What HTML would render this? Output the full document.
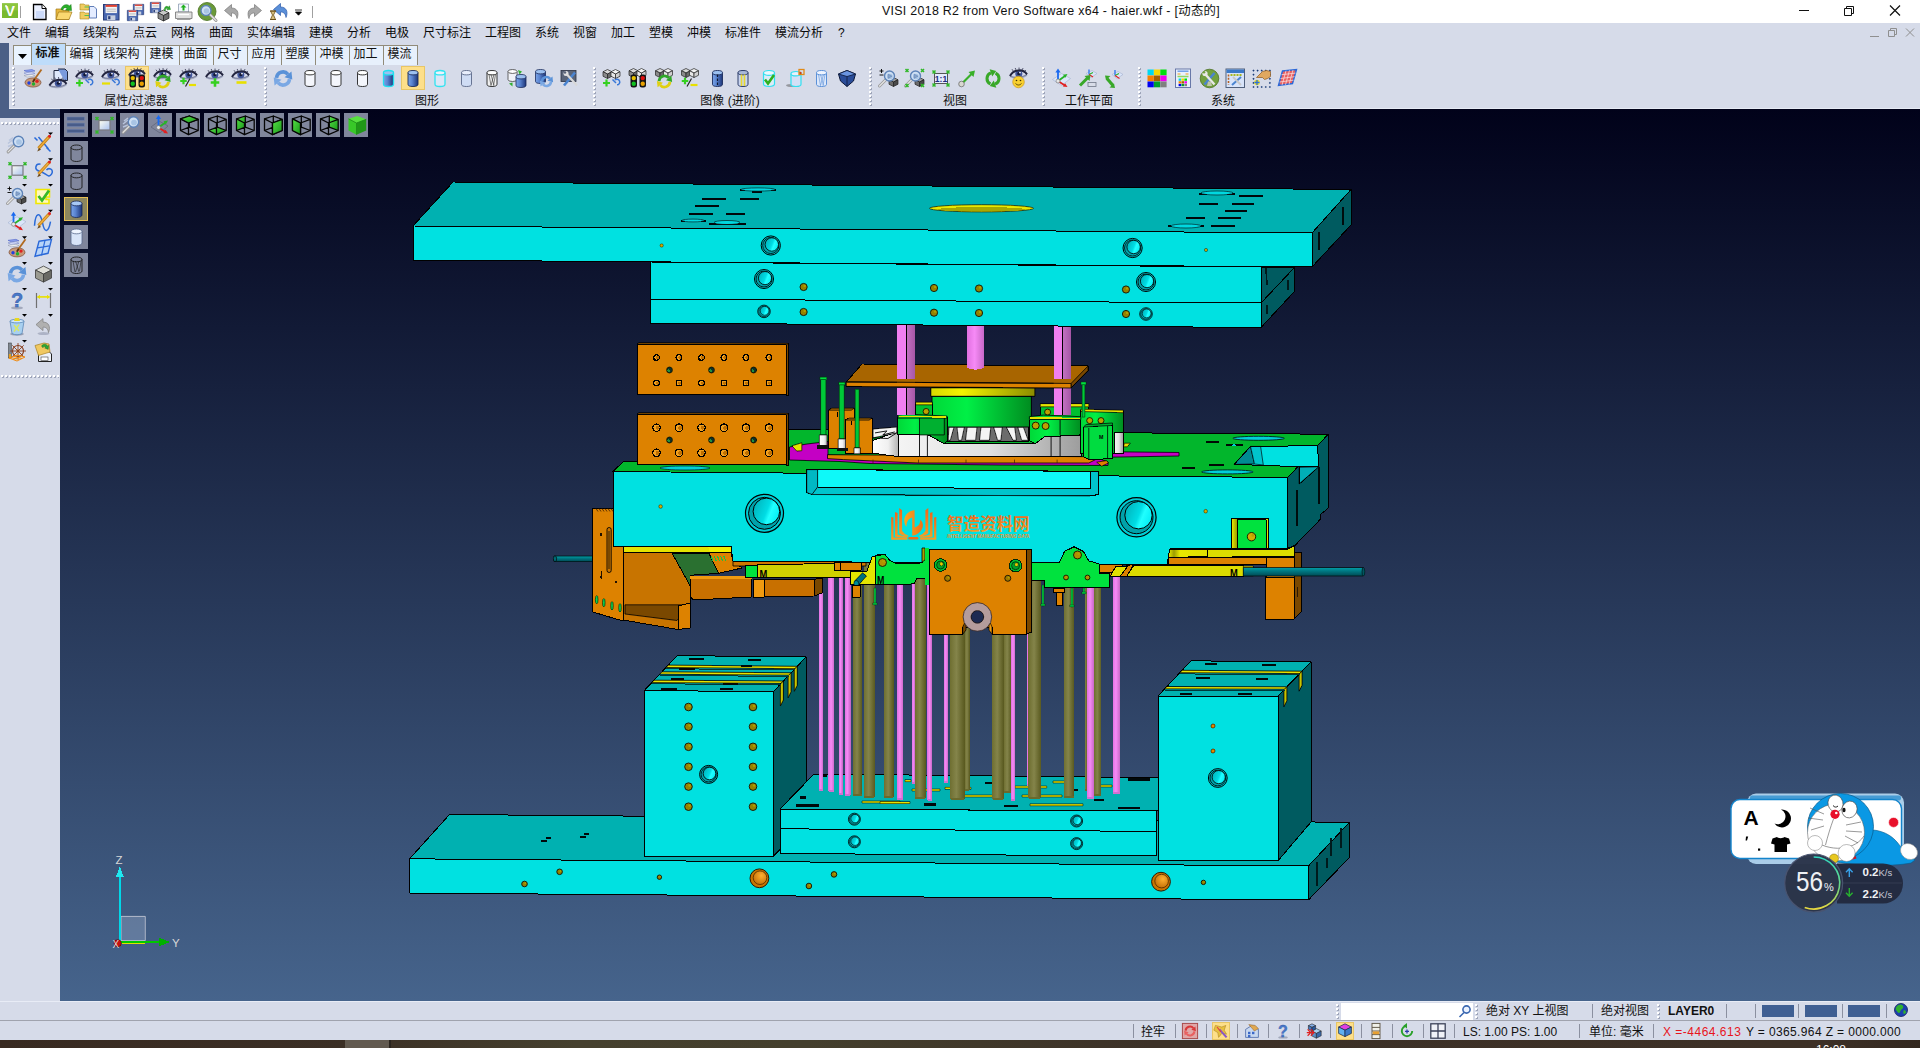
<!DOCTYPE html>
<html lang="zh"><head><meta charset="utf-8"><title>VISI 2018 R2</title>
<style>
*{box-sizing:border-box;margin:0;padding:0}
html,body{width:1920px;height:1048px;overflow:hidden;background:#d6dbe9}
body{font-family:"Liberation Sans","Noto Sans CJK SC",sans-serif;font-size:12px;color:#000;position:relative}
.abs{position:absolute}
#title{left:0;top:0;width:1920px;height:23px;background:#fff}
#title .cap{position:absolute;left:881px;top:3px;width:340px;text-align:center;font-size:12.4px;letter-spacing:0.3px;line-height:16px;white-space:nowrap;color:#111}
#menubar{left:0;top:23px;width:1920px;height:20px;background:#d6dbe9}
#menubar span{position:absolute;top:1px;line-height:18px;font-size:12px;white-space:nowrap;color:#0a0a0a}
#strip{left:0;top:43px;width:9px;height:75px;background:#4b5f86}
#strip2{left:0;top:109px;width:60px;height:9px;background:#4b5f86}
#tabs{left:10px;top:43px;height:22px;width:420px}
#tabs span{position:absolute;top:2px;height:20px;line-height:17px;font-size:12px;text-align:center;padding-right:2px;background:#e7f0fc;border:1px solid #918b79;border-bottom:none;white-space:nowrap;color:#111}
#tabs span.sel{background:#bedcfa;border-color:#918b79;font-weight:bold;top:0px;height:22px;line-height:19px}
#tb{left:9px;top:65px;width:1911px;height:44px;background:#d6dbe9;border-bottom:1px solid #e6eaf4}
.glabel{position:absolute;top:94px;font-size:12px;line-height:14px;white-space:nowrap;transform:translateX(-50%);color:#111}
.vsep{position:absolute;top:67px;width:3px;height:40px;background-image:linear-gradient(#fff 50%,transparent 50%),linear-gradient(#9ea5b9 50%,transparent 50%);background-size:2px 4px,2px 4px;background-position:0 0,1px 1px;background-repeat:repeat-y}
#left{left:0;top:118px;width:60px;height:883px;background:#d6dbe9}
.hgrip{position:absolute;left:1px;width:58px;height:3px;background-image:linear-gradient(90deg,#fff 50%,transparent 50%),linear-gradient(90deg,#9ea5b9 50%,transparent 50%);background-size:4px 2px,4px 2px;background-position:0 0,1px 1px;background-repeat:repeat-x}
#vp{left:60px;top:109px;width:1860px;height:892px;background:linear-gradient(#01021a 0%,#46648c 100%);overflow:hidden}
#sb1{left:0;top:1001px;width:1920px;height:20px;background:#d6dbe9;border-top:1px solid #e8ecf6}
#sb2{left:0;top:1020px;width:1920px;height:20px;background:#d6dbe9;border-top:1px solid #a0a3ae}
#sb1 span,#sb2 span{position:absolute;white-space:nowrap;font-size:12px;line-height:16px;color:#111}
.sbsep{position:absolute;width:1px;height:14px;background:#8b90a0}
#task{left:0;top:1040px;width:1920px;height:8px;overflow:hidden;background:linear-gradient(90deg,#382a21 0%,#3b2f25 18%,#45402e 30%,#443f2d 42%,#3c3127 60%,#3d3026 95%,#33281f 100%)}

.hl{position:absolute;background:#fddf8a;border:1px solid #e8c666}
.vbtn{position:absolute;width:24px;height:24px;background:#80869c}
.vbtn.sel{background:#8c865e;border:1px solid #e6c054}
</style></head>
<body>
<div id="title" class="abs"><div class="cap">VISI 2018 R2 from Vero Software x64 - haier.wkf - [动态的]</div>
<svg class="abs" style="left:1780px;top:0" width="140" height="23" viewBox="1780 0 140 23" fill="none" stroke="#111" stroke-width="1"><path d="M1799 10.5h10"/><path d="M1844.5 8.5h7v7h-7z"/><path d="M1846.5 8.5v-2h7v7h-2"/><path d="M1890 5.5l10 10M1900 5.5l-10 10" stroke-width="1.2"/></svg>
</div>
<div id="menubar" class="abs"><span style="left:7px">文件</span><span style="left:45px">编辑</span><span style="left:83px">线架构</span><span style="left:133px">点云</span><span style="left:171px">网格</span><span style="left:209px">曲面</span><span style="left:247px">实体编辑</span><span style="left:309px">建模</span><span style="left:347px">分析</span><span style="left:385px">电极</span><span style="left:423px">尺寸标注</span><span style="left:485px">工程图</span><span style="left:535px">系统</span><span style="left:573px">视窗</span><span style="left:611px">加工</span><span style="left:649px">塑模</span><span style="left:687px">冲模</span><span style="left:725px">标准件</span><span style="left:775px">模流分析</span><span style="left:838px">?</span>
<svg class="abs" style="left:1760px;top:0" width="160" height="20" viewBox="1760 23 160 20" fill="none" stroke="#8f8f8f" stroke-width="1"><path d="M1870 36.5h9"/><path d="M1888.500 30.500h6v6h-6z"/><path d="M1890.500 30.500v-2h6v6h-2"/><path d="M1906 28.500l8 8M1914 28.500l-8 8"/></svg>
</div>
<div id="strip" class="abs"></div><div id="strip2" class="abs"></div>
<div id="tabs" class="abs"><span style="left:3px;width:19px;background:#e9f3ff"><svg width="9" height="5" viewBox="0 0 9 5" style="position:absolute;left:4px;top:8px"><path d="M0 0h9l-4.500 5z" fill="#000"/></svg></span><span class="sel" style="left:21px;width:35px">标准</span><span class="" style="left:55px;width:35px">编辑</span><span class="" style="left:89px;width:47px">线架构</span><span class="" style="left:135px;width:35px">建模</span><span class="" style="left:169px;width:35px">曲面</span><span class="" style="left:203px;width:35px">尺寸</span><span class="" style="left:237px;width:35px">应用</span><span class="" style="left:271px;width:35px">塑膜</span><span class="" style="left:305px;width:35px">冲模</span><span class="" style="left:339px;width:35px">加工</span><span class="" style="left:373px;width:35px">模流</span></div>
<div id="tb" class="abs"></div>
<div class="vsep" style="left:12px"></div>
<div class="vsep" style="left:264px"></div>
<div class="vsep" style="left:593px"></div>
<div class="vsep" style="left:869px"></div>
<div class="vsep" style="left:1042px"></div>
<div class="vsep" style="left:1138px"></div>
<div class="glabel" style="left:136px">属性/过滤器</div>
<div class="glabel" style="left:427px">图形</div>
<div class="glabel" style="left:730px">图像 (进阶)</div>
<div class="glabel" style="left:955px">视图</div>
<div class="glabel" style="left:1089px">工作平面</div>
<div class="glabel" style="left:1223px">系统</div>
<div id="left" class="abs"><div class="hgrip" style="top:4px"></div><div class="hgrip" style="top:257px"></div></div>
<div id="vp" class="abs"><svg class="abs" style="left:0;top:-1px" width="1860" height="893" viewBox="60 108 1860 893" stroke-linejoin="round" shape-rendering="crispEdges">
<defs><linearGradient id="gcone" x1="0" x2="1" y1="0.300" y2="0.700"><stop offset="0" stop-color="#00b4bc"/><stop offset="0.500" stop-color="#00dce4"/><stop offset="0.650" stop-color="#20ffff"/><stop offset="1" stop-color="#00ecf4"/></linearGradient><radialGradient id="gocone" cx="0.6" cy="0.35" r="0.8"><stop offset="0" stop-color="#ffb030"/><stop offset="1" stop-color="#b86400"/></radialGradient><linearGradient id="gol" x1="0" x2="1" y1="0" y2="0"><stop offset="0" stop-color="#6e6e30"/><stop offset="0.45" stop-color="#84844a"/><stop offset="1" stop-color="#5a5a20"/></linearGradient><linearGradient id="gpk" x1="0" x2="1" y1="0" y2="0"><stop offset="0" stop-color="#e070e0"/><stop offset="0.45" stop-color="#f68af6"/><stop offset="1" stop-color="#c868c8"/></linearGradient><linearGradient id="gpk2" x1="0" x2="1" y1="0" y2="0"><stop offset="0" stop-color="#f07ff0"/><stop offset="0.5" stop-color="#f07ff0"/><stop offset="0.5" stop-color="#000"/><stop offset="0.56" stop-color="#000"/><stop offset="0.56" stop-color="#c070c0"/><stop offset="1" stop-color="#a656a6"/></linearGradient><linearGradient id="ggr" x1="0" x2="1" y1="0" y2="0"><stop offset="0" stop-color="#00d838"/><stop offset="0.35" stop-color="#00f046"/><stop offset="1" stop-color="#008c20"/></linearGradient><linearGradient id="gye" x1="0" x2="1" y1="0" y2="0"><stop offset="0" stop-color="#d8d800"/><stop offset="0.3" stop-color="#f4f400"/><stop offset="1" stop-color="#8c8c00"/></linearGradient><linearGradient id="gye2" x1="0" x2="1" y1="0" y2="0"><stop offset="0" stop-color="#f0f000"/><stop offset="0.150" stop-color="#9c9c00"/><stop offset="0.300" stop-color="#e8e800"/><stop offset="1" stop-color="#e0e000"/></linearGradient><linearGradient id="gwh" x1="0" x2="1" y1="0" y2="0"><stop offset="0" stop-color="#f4f4f4"/><stop offset="0.5" stop-color="#e0e0e0"/><stop offset="1" stop-color="#9c9c9c"/></linearGradient><linearGradient id="gwh2" x1="0" x2="1" y1="0" y2="0"><stop offset="0" stop-color="#ffffff"/><stop offset="0.6" stop-color="#f0f0f0"/><stop offset="1" stop-color="#b0b0b0"/></linearGradient><linearGradient id="gteal" x1="0" x2="0" y1="0" y2="1"><stop offset="0" stop-color="#00a0a8"/><stop offset="0.4" stop-color="#007a84"/><stop offset="1" stop-color="#004a54"/></linearGradient><linearGradient id="gwm" x1="0" x2="0" y1="0" y2="1"><stop offset="0" stop-color="#f0661a"/><stop offset="1" stop-color="#f6a024"/></linearGradient><linearGradient id="gwm2" x1="0" x2="1" y1="0" y2="0"><stop offset="0" stop-color="#f8a820"/><stop offset="1" stop-color="#f07018"/></linearGradient></defs>
<polygon points="449.5,814.5 1349.5,822.3 1308.4,866 409.6,858.8" fill="#00b1b1" stroke="#000" stroke-width="1"/><polygon points="1308.4,866 1349.5,822.3 1349.5,857.4 1308.4,900" fill="#005b60" stroke="#000" stroke-width="1"/><polygon points="409.6,858.8 1308.4,866 1308.4,900 409.6,893" fill="#00e1e1" stroke="#000" stroke-width="1"/><rect x="541" y="840" width="6" height="2" fill="#00080a"/><rect x="546" y="836.5" width="5" height="2" fill="#00080a"/><rect x="580" y="835.5" width="6" height="2" fill="#00080a"/><rect x="584" y="832.5" width="5" height="2" fill="#00080a"/><rect x="1226" y="835" width="6" height="2" fill="#00080a"/><polyline points="1317,862 1317,886" fill="none" stroke="#001a1c" stroke-width="1.3"/><polyline points="1327,858 1327,868" fill="none" stroke="#001a1c" stroke-width="1.3"/><polyline points="1331,838 1331,856" fill="none" stroke="#001a1c" stroke-width="1.3"/><polyline points="1341,828 1341,848" fill="none" stroke="#001a1c" stroke-width="1.3"/><g shape-rendering="geometricPrecision"><circle cx="524.5" cy="884" r="2.8" fill="#948200" stroke="#141000" stroke-width="0.9"/><circle cx="525.3" cy="883.2" r="0.9" fill="#b4a000"/></g><g shape-rendering="geometricPrecision"><circle cx="559.6" cy="871.8" r="2.8" fill="#948200" stroke="#141000" stroke-width="0.9"/><circle cx="560.4" cy="871" r="0.9" fill="#b4a000"/></g><g shape-rendering="geometricPrecision"><circle cx="659.4" cy="877.2" r="2.2" fill="#948200" stroke="#141000" stroke-width="0.9"/><circle cx="660.1" cy="876.5" r="0.7" fill="#b4a000"/></g><g shape-rendering="geometricPrecision"><circle cx="808.9" cy="886" r="2.8" fill="#948200" stroke="#141000" stroke-width="0.9"/><circle cx="809.7" cy="885.2" r="0.9" fill="#b4a000"/></g><g shape-rendering="geometricPrecision"><circle cx="834" cy="874.4" r="2.8" fill="#948200" stroke="#141000" stroke-width="0.9"/><circle cx="834.8" cy="873.6" r="0.9" fill="#b4a000"/></g><g shape-rendering="geometricPrecision"><circle cx="1203.4" cy="882.4" r="2.2" fill="#948200" stroke="#141000" stroke-width="0.9"/><circle cx="1204.1" cy="881.7" r="0.7" fill="#b4a000"/></g><g shape-rendering="geometricPrecision"><circle cx="759.4" cy="878.3" r="9.4" fill="#c87400" stroke="#301800" stroke-width="1"/><circle cx="760" cy="877.7" r="6.8" fill="url(#gocone)" stroke="#402000" stroke-width="0.7"/></g><g shape-rendering="geometricPrecision"><circle cx="1161" cy="881.7" r="9.4" fill="#c87400" stroke="#301800" stroke-width="1"/><circle cx="1161.6" cy="881.1" r="6.8" fill="url(#gocone)" stroke="#402000" stroke-width="0.7"/></g><polygon points="773.7,691.3 806,657 806,822 773.7,856" fill="#005b60" stroke="#000" stroke-width="1"/><polygon points="644,690.8 677.3,655.6 806,657 773.7,691.3" fill="#00b1b1" stroke="#000" stroke-width="1"/><polygon points="668.3,665.1 797.3,666.3 795.1,668.7 666.1,667.5" fill="#e4e400" stroke="#000" stroke-width="0.8"/><polygon points="797.3,666.3 797.3,685.3 794.3,691.3 794.3,669.3" fill="#c8c400" stroke="#000" stroke-width="0.8"/><polyline points="666.1,668.7 795.1,669.9" fill="none" stroke="#003a3c" stroke-width="1"/><polygon points="662,671.8 791.1,672.8 788.9,675.2 659.8,674.2" fill="#e4e400" stroke="#000" stroke-width="0.8"/><polygon points="791.1,672.8 791.1,691.8 788.1,697.8 788.1,675.8" fill="#c8c400" stroke="#000" stroke-width="0.8"/><polyline points="659.8,675.4 788.9,676.4" fill="none" stroke="#003a3c" stroke-width="1"/><polygon points="654,680.2 783.4,681 781.2,683.4 651.8,682.6" fill="#e4e400" stroke="#000" stroke-width="0.8"/><polygon points="783.4,681 783.4,700 780.4,706 780.4,684" fill="#c8c400" stroke="#000" stroke-width="0.8"/><polyline points="651.8,683.8 781.2,684.6" fill="none" stroke="#003a3c" stroke-width="1"/><rect x="689" y="658" width="15" height="2" fill="#00080a"/><rect x="748" y="658.5" width="13" height="2" fill="#00080a"/><rect x="679" y="668" width="16" height="2" fill="#00080a"/><rect x="741" y="664.5" width="11" height="2" fill="#00080a"/><rect x="671" y="678" width="13" height="2" fill="#00080a"/><rect x="723" y="683" width="15" height="2" fill="#00080a"/><rect x="661" y="688" width="16" height="2" fill="#00080a"/><rect x="720" y="688" width="13" height="2" fill="#00080a"/><polygon points="644,690.8 773.7,691.3 773.7,856 644,856" fill="#00e1e1" stroke="#000" stroke-width="1"/><g shape-rendering="geometricPrecision"><circle cx="688.5" cy="707" r="3.8" fill="#948200" stroke="#141000" stroke-width="0.9"/><circle cx="689.6" cy="705.9" r="1.2" fill="#b4a000"/></g><g shape-rendering="geometricPrecision"><circle cx="688.5" cy="726.7" r="3.8" fill="#948200" stroke="#141000" stroke-width="0.9"/><circle cx="689.6" cy="725.6" r="1.2" fill="#b4a000"/></g><g shape-rendering="geometricPrecision"><circle cx="688.5" cy="746.8" r="3.8" fill="#948200" stroke="#141000" stroke-width="0.9"/><circle cx="689.6" cy="745.7" r="1.2" fill="#b4a000"/></g><g shape-rendering="geometricPrecision"><circle cx="688.5" cy="766.8" r="3.8" fill="#948200" stroke="#141000" stroke-width="0.9"/><circle cx="689.6" cy="765.7" r="1.2" fill="#b4a000"/></g><g shape-rendering="geometricPrecision"><circle cx="688.5" cy="786.6" r="3.8" fill="#948200" stroke="#141000" stroke-width="0.9"/><circle cx="689.6" cy="785.5" r="1.2" fill="#b4a000"/></g><g shape-rendering="geometricPrecision"><circle cx="688.5" cy="806.7" r="3.8" fill="#948200" stroke="#141000" stroke-width="0.9"/><circle cx="689.6" cy="805.6" r="1.2" fill="#b4a000"/></g><g shape-rendering="geometricPrecision"><circle cx="753" cy="707" r="3.8" fill="#948200" stroke="#141000" stroke-width="0.9"/><circle cx="754.1" cy="705.9" r="1.2" fill="#b4a000"/></g><g shape-rendering="geometricPrecision"><circle cx="753" cy="726.7" r="3.8" fill="#948200" stroke="#141000" stroke-width="0.9"/><circle cx="754.1" cy="725.6" r="1.2" fill="#b4a000"/></g><g shape-rendering="geometricPrecision"><circle cx="753" cy="746.8" r="3.8" fill="#948200" stroke="#141000" stroke-width="0.9"/><circle cx="754.1" cy="745.7" r="1.2" fill="#b4a000"/></g><g shape-rendering="geometricPrecision"><circle cx="753" cy="766.8" r="3.8" fill="#948200" stroke="#141000" stroke-width="0.9"/><circle cx="754.1" cy="765.7" r="1.2" fill="#b4a000"/></g><g shape-rendering="geometricPrecision"><circle cx="753" cy="786.6" r="3.8" fill="#948200" stroke="#141000" stroke-width="0.9"/><circle cx="754.1" cy="785.5" r="1.2" fill="#b4a000"/></g><g shape-rendering="geometricPrecision"><circle cx="753" cy="806.7" r="3.8" fill="#948200" stroke="#141000" stroke-width="0.9"/><circle cx="754.1" cy="805.6" r="1.2" fill="#b4a000"/></g><g shape-rendering="geometricPrecision"><circle cx="708.6" cy="774.4" r="9" fill="#00ccd4" stroke="#000" stroke-width="1"/><circle cx="708.6" cy="774.4" r="7.6" fill="#00a2aa" stroke="#000" stroke-width="0.8"/><circle cx="709.5" cy="773.5" r="6.3" fill="url(#gcone)" stroke="#000" stroke-width="0.8"/></g>
<polygon points="814,774 1192,778 1158,811 780,809" fill="#00b1b1" stroke="#000" stroke-width="1"/><rect x="862" y="801" width="38" height="2" fill="#e4e400" stroke="#000" stroke-width="0.500"/><rect x="880" y="801.5" width="30" height="2" fill="#e4e400" stroke="#000" stroke-width="0.500"/><rect x="945" y="787.4" width="26" height="2" fill="#e4e400" stroke="#000" stroke-width="0.500"/><rect x="963" y="795" width="31.6" height="2" fill="#e4e400" stroke="#000" stroke-width="0.500"/><rect x="1015" y="786" width="31.7" height="2" fill="#e4e400" stroke="#000" stroke-width="0.500"/><rect x="1022" y="795" width="40" height="2" fill="#e4e400" stroke="#000" stroke-width="0.500"/><rect x="1053" y="781" width="19.7" height="2" fill="#e4e400" stroke="#000" stroke-width="0.500"/><rect x="1030" y="803.8" width="53" height="2" fill="#e4e400" stroke="#000" stroke-width="0.500"/><rect x="905" y="779.6" width="6" height="2" fill="#e4e400" stroke="#000" stroke-width="0.500"/><rect x="912" y="789" width="28" height="2" fill="#e4e400" stroke="#000" stroke-width="0.500"/><rect x="1090" y="785" width="22" height="2" fill="#e4e400" stroke="#000" stroke-width="0.500"/><rect x="796" y="804.2" width="23" height="2.400" fill="#00080a"/><rect x="800" y="796.3" width="6" height="2.400" fill="#00080a"/><rect x="822" y="774.8" width="5" height="2.400" fill="#00080a"/><rect x="924" y="803.3" width="12" height="2.400" fill="#00080a"/><rect x="1004" y="804.8" width="14" height="2.400" fill="#00080a"/><rect x="1118" y="806.8" width="22" height="2.400" fill="#00080a"/><rect x="1128" y="778.3" width="22" height="2.400" fill="#00080a"/><rect x="1094" y="798.8" width="10" height="2.400" fill="#00080a"/><rect x="985" y="781.8" width="11" height="2.400" fill="#00080a"/><rect x="1066" y="788.8" width="12" height="2.400" fill="#00080a"/><polygon points="780,809 1156,811 1156,831.4 780,828.8" fill="#00e1e1" stroke="#000" stroke-width="1"/><polygon points="780,828.8 1156,831.4 1156,856 780,853.5" fill="#00e1e1" stroke="#000" stroke-width="1"/><g shape-rendering="geometricPrecision"><circle cx="854.4" cy="819.2" r="6" fill="#00ccd4" stroke="#000" stroke-width="0.8"/><circle cx="854.4" cy="819.2" r="5" fill="#00a2aa" stroke="#000" stroke-width="0.6"/><circle cx="855" cy="818.6" r="4.2" fill="url(#gcone)" stroke="#000" stroke-width="0.6"/></g><g shape-rendering="geometricPrecision"><circle cx="854.4" cy="841.8" r="6" fill="#00ccd4" stroke="#000" stroke-width="0.8"/><circle cx="854.4" cy="841.8" r="5" fill="#00a2aa" stroke="#000" stroke-width="0.6"/><circle cx="855" cy="841.2" r="4.2" fill="url(#gcone)" stroke="#000" stroke-width="0.6"/></g><g shape-rendering="geometricPrecision"><circle cx="1076.6" cy="821" r="6" fill="#00ccd4" stroke="#000" stroke-width="0.8"/><circle cx="1076.6" cy="821" r="5" fill="#00a2aa" stroke="#000" stroke-width="0.6"/><circle cx="1077.2" cy="820.4" r="4.2" fill="url(#gcone)" stroke="#000" stroke-width="0.6"/></g><g shape-rendering="geometricPrecision"><circle cx="1076.6" cy="843.6" r="6" fill="#00ccd4" stroke="#000" stroke-width="0.8"/><circle cx="1076.6" cy="843.6" r="5" fill="#00a2aa" stroke="#000" stroke-width="0.6"/><circle cx="1077.2" cy="843" r="4.2" fill="url(#gcone)" stroke="#000" stroke-width="0.6"/></g><rect x="818.8" y="560" width="4.4" height="230" fill="url(#gpk)"/><ellipse cx="821" cy="790" rx="2.2" ry="1.2" fill="#d070d0"/><rect x="828.4" y="560" width="6" height="231" fill="url(#gpk)"/><ellipse cx="831.4" cy="791" rx="3" ry="1.2" fill="#d070d0"/><rect x="838.8" y="560" width="3.9" height="234" fill="url(#gpk)"/><ellipse cx="840.8" cy="794" rx="2" ry="1.2" fill="#d070d0"/><rect x="844.8" y="560" width="5.7" height="235" fill="url(#gpk)"/><ellipse cx="847.6" cy="795" rx="2.9" ry="1.2" fill="#d070d0"/><rect x="853" y="560" width="9" height="235" fill="url(#gol)"/><ellipse cx="857.5" cy="795" rx="4.5" ry="1.2" fill="#6a6a2c"/><rect x="863.5" y="560" width="11.5" height="237" fill="url(#gol)"/><ellipse cx="869.2" cy="797" rx="5.8" ry="1.2" fill="#6a6a2c"/><rect x="884" y="560" width="9.5" height="237" fill="url(#gol)"/><ellipse cx="888.8" cy="797" rx="4.8" ry="1.2" fill="#6a6a2c"/><rect x="897" y="560" width="6.4" height="239" fill="url(#gpk)"/><ellipse cx="900.2" cy="799" rx="3.2" ry="1.2" fill="#d070d0"/><rect x="911.8" y="560" width="3.2" height="223" fill="url(#gpk)"/><ellipse cx="913.4" cy="783" rx="1.6" ry="1.2" fill="#d070d0"/><rect x="915" y="560" width="10.6" height="238" fill="url(#gol)"/><ellipse cx="920.3" cy="798" rx="5.3" ry="1.2" fill="#6a6a2c"/><rect x="927.4" y="560" width="4.6" height="240" fill="url(#gpk)"/><ellipse cx="929.7" cy="800" rx="2.3" ry="1.2" fill="#d070d0"/><rect x="943.8" y="560" width="4.4" height="222" fill="url(#gpk)"/><ellipse cx="946" cy="782" rx="2.2" ry="1.2" fill="#d070d0"/><rect x="949.8" y="560" width="14.8" height="239" fill="url(#gol)"/><ellipse cx="957.2" cy="799" rx="7.4" ry="1.2" fill="#6a6a2c"/><rect x="964.6" y="560" width="5.2" height="230" fill="url(#gol)"/><ellipse cx="967.2" cy="790" rx="2.6" ry="1.2" fill="#6a6a2c"/><rect x="992" y="560" width="11.7" height="239" fill="url(#gol)"/><ellipse cx="997.9" cy="799" rx="5.9" ry="1.2" fill="#6a6a2c"/><rect x="1003.7" y="560" width="7.8" height="232" fill="url(#gol)"/><ellipse cx="1007.6" cy="792" rx="3.9" ry="1.2" fill="#6a6a2c"/><rect x="1011" y="560" width="4.4" height="240" fill="url(#gpk)"/><ellipse cx="1013.2" cy="800" rx="2.2" ry="1.2" fill="#d070d0"/><rect x="1027" y="560" width="4" height="225" fill="url(#gpk)"/><ellipse cx="1029" cy="785" rx="2" ry="1.2" fill="#d070d0"/><rect x="1028.4" y="560" width="12.6" height="238" fill="url(#gol)"/><ellipse cx="1034.7" cy="798" rx="6.3" ry="1.2" fill="#6a6a2c"/><rect x="1063.6" y="560" width="10.4" height="237" fill="url(#gol)"/><ellipse cx="1068.8" cy="797" rx="5.2" ry="1.2" fill="#6a6a2c"/><rect x="1085" y="560" width="2" height="230" fill="url(#gol)"/><ellipse cx="1086" cy="790" rx="1" ry="1.2" fill="#6a6a2c"/><rect x="1087" y="560" width="7" height="238" fill="url(#gpk)"/><ellipse cx="1090.5" cy="798" rx="3.5" ry="1.2" fill="#d070d0"/><rect x="1094" y="560" width="7.4" height="235" fill="url(#gol)"/><ellipse cx="1097.7" cy="795" rx="3.7" ry="1.2" fill="#6a6a2c"/><rect x="1112.6" y="560" width="7.4" height="233" fill="url(#gpk)"/><ellipse cx="1116.3" cy="793" rx="3.7" ry="1.2" fill="#d070d0"/>
<polygon points="1278,696 1311,662 1311,822 1278,860.8" fill="#005b60" stroke="#000" stroke-width="1"/><polygon points="1158,696 1191,660.8 1311,662 1278,696" fill="#00b1b1" stroke="#000" stroke-width="1"/><polygon points="1182.1,670.3 1302.1,671.2 1299.9,673.6 1179.9,672.7" fill="#e4e400" stroke="#000" stroke-width="0.8"/><polygon points="1302.1,671.2 1302.1,685.2 1299.1,691.2 1299.1,674.2" fill="#c8c400" stroke="#000" stroke-width="0.8"/><polyline points="1179.9,673.9 1299.9,674.8" fill="none" stroke="#003a3c" stroke-width="1"/><polygon points="1166.9,686.5 1286.9,686.8 1284.7,689.2 1164.7,688.9" fill="#e4e400" stroke="#000" stroke-width="0.8"/><polygon points="1286.9,686.8 1286.9,700.8 1283.9,706.8 1283.9,689.8" fill="#c8c400" stroke="#000" stroke-width="0.8"/><polyline points="1164.7,690.1 1284.7,690.4" fill="none" stroke="#003a3c" stroke-width="1"/><rect x="1205" y="662.5" width="12" height="2" fill="#00080a"/><rect x="1262" y="663.5" width="14" height="2" fill="#00080a"/><rect x="1180" y="692.5" width="12" height="2" fill="#00080a"/><rect x="1238" y="693" width="14" height="2" fill="#00080a"/><rect x="1196" y="677" width="14" height="2" fill="#00080a"/><rect x="1256" y="678" width="12" height="2" fill="#00080a"/><polygon points="1158,696 1278,696 1278,860.8 1158,860.8" fill="#00e1e1" stroke="#000" stroke-width="1"/><g shape-rendering="geometricPrecision"><circle cx="1217.8" cy="778" r="9.4" fill="#00ccd4" stroke="#000" stroke-width="1"/><circle cx="1217.8" cy="778" r="7.9" fill="#00a2aa" stroke="#000" stroke-width="0.8"/><circle cx="1218.7" cy="777.1" r="6.6" fill="url(#gcone)" stroke="#000" stroke-width="0.8"/></g><circle cx="1213" cy="726" r="2" fill="#e08a00" stroke="#402000" stroke-width="0.7"/><circle cx="1213" cy="751" r="2" fill="#e08a00" stroke="#402000" stroke-width="0.7"/>
<rect x="554" y="556" width="40" height="5.500" fill="url(#gteal)" stroke="#001418" stroke-width="0.800"/><ellipse cx="555" cy="558.8" rx="1.6" ry="2.9" fill="#006a74" stroke="#001418" stroke-width="0.8"/><polygon points="623,546 672,553 690,585.5 690,628 678,629.5 623,620" fill="#c87400" stroke="#000" stroke-width="1"/><polygon points="625,604.8 686,604.8 686,610 677,620.5 625,614" fill="#7a4800" stroke="#000" stroke-width="0.8"/><polygon points="678,606 690,603 690,628 678,629.5" fill="#dd8200" stroke="#000" stroke-width="1"/><polygon points="672,553 708.4,553 718.6,573.3 690,575.3 690,585.5" fill="#2a7030" stroke="#000" stroke-width="1"/><polygon points="708.4,552 731,552 733,561 742,568 718.6,573.3" fill="#dd8200" stroke="#000" stroke-width="1"/><polyline points="711,556 713,561" fill="none" stroke="#20c040" stroke-width="1"/><polyline points="714.2,556 716.2,561" fill="none" stroke="#20c040" stroke-width="1"/><polyline points="717.4,556 719.4,561" fill="none" stroke="#20c040" stroke-width="1"/><polyline points="720.6,556 722.6,561" fill="none" stroke="#20c040" stroke-width="1"/><polyline points="723.8,556 725.8,561" fill="none" stroke="#20c040" stroke-width="1"/><polygon points="690,576.3 751.5,576.3 751.5,597 694,600 690,597" fill="#c87000" stroke="#000" stroke-width="1"/><polygon points="690,576.3 751.5,576.3 751.5,579 690,579" fill="#f09a10"/><polygon points="753,579.4 814,579.4 814,596 753,597" fill="#c87000" stroke="#000" stroke-width="1"/><polygon points="814,579.4 822,578 822,593 814,596" fill="#7a4800" stroke="#000" stroke-width="1"/><polygon points="753,579.4 764,579.4 764,597 753,597" fill="#f09a10" stroke="#000" stroke-width="1"/><polygon points="621,546 731,546 731,552 621,552" fill="#e4e400" stroke="#000" stroke-width="1"/><polygon points="708,546 731,546 731,552 710,552" fill="#f0f000"/><polygon points="733,560 866,560 866,566 733,566" fill="#d07800" stroke="#000" stroke-width="0.8"/><polygon points="745,565 757,565 757,577 745,577" fill="#00e23e" stroke="#000" stroke-width="1"/><polygon points="757,565 850.6,563 850.6,577 757,578" fill="#d0d000" stroke="#000" stroke-width="1"/><text x="759.5" y="577.5" font-family="Liberation Sans,sans-serif" font-weight="bold" font-size="10.5" fill="#000" textLength="7.8" lengthAdjust="spacingAndGlyphs">M</text><polygon points="834,562 861,562 861,570 834,570" fill="#dd8200" stroke="#000" stroke-width="1"/><polygon points="840,562 840,570" fill="none" stroke="#000" stroke-width="1"/><polygon points="592.7,508.5 613.5,508.5 613.5,546 623,546 623,621 592.7,612" fill="#dd8200" stroke="#000" stroke-width="1"/><polyline points="596,508.5 598,511.5" fill="none" stroke="#402000" stroke-width="0.8"/><polyline points="599,508.5 601,511.5" fill="none" stroke="#402000" stroke-width="0.8"/><polyline points="602,508.5 604,511.5" fill="none" stroke="#402000" stroke-width="0.8"/><polyline points="605,508.5 607,511.5" fill="none" stroke="#402000" stroke-width="0.8"/><polyline points="608,508.5 610,511.5" fill="none" stroke="#402000" stroke-width="0.8"/><polyline points="611,508.5 613,511.5" fill="none" stroke="#402000" stroke-width="0.8"/><rect x="607" y="527.500" width="4.200" height="45" rx="2.100" fill="#c87400" stroke="#000" stroke-width="0.900"/><rect x="608.400" y="531" width="1.600" height="38" rx="0.800" fill="#7a4800"/><polygon points="601,532.3 602.3,534.7 601,537.1 599.7,534.7" fill="#201000"/><polygon points="601,574.6 602.3,577 601,579.4 599.7,577" fill="#201000"/><polygon points="616,579.6 617.3,582 616,584.4 614.7,582" fill="#201000"/><rect x="600.500" y="571" width="1" height="8" fill="#201000"/><ellipse cx="596.7" cy="599.7" rx="1.3" ry="4.2" fill="#10d050" stroke="#003010" stroke-width="0.7"/><ellipse cx="603.8" cy="602.7" rx="1.3" ry="4.2" fill="#10d050" stroke="#003010" stroke-width="0.7"/><ellipse cx="612" cy="605.8" rx="1.3" ry="4.2" fill="#10d050" stroke="#003010" stroke-width="0.7"/><ellipse cx="620" cy="607.8" rx="1.3" ry="4.2" fill="#10d050" stroke="#003010" stroke-width="0.7"/><polygon points="613,471.5 624,461 640,461 640,428 1136,432.9 1328.3,434.2 1317.5,445.7 1298,466.7 1287.7,477.5" fill="#02b62c" stroke="#000" stroke-width="1"/><ellipse cx="1258.6" cy="438.3" rx="25.7" ry="2" fill="#00d0d8" stroke="#002020" stroke-width="0.9"/><ellipse cx="1227.4" cy="471.9" rx="25.7" ry="2" fill="#00d0d8" stroke="#002020" stroke-width="0.9"/><rect x="1205.8" y="440.8" width="12.9" height="2" fill="#000a04"/><rect x="1226.1" y="444.4" width="16.9" height="2" fill="#000a04"/><rect x="1209.2" y="463.8" width="14.9" height="2" fill="#000a04"/><rect x="1182.1" y="466.8" width="12.9" height="2" fill="#000a04"/><ellipse cx="1234.2" cy="445.3" rx="2" ry="0.9" fill="#00d0d8"/><polygon points="1234.2,464.4 1250.5,446.4 1317.5,445.7 1318.8,466.7 1297.9,466.7 1263.3,465.4" fill="#00e1e1" stroke="#000" stroke-width="1"/><polygon points="1234.2,464.4 1250.5,446.4 1254.5,464" fill="#008a92" stroke="#000" stroke-width="0.8"/><polygon points="1250.5,446.4 1260.6,446.4 1263.3,465 1254.5,464" fill="#00c4cc" stroke="#002428" stroke-width="0.8"/><polyline points="1234.2,464.4 1250.5,446.4 1317.5,445.7" fill="none" stroke="#000" stroke-width="1"/><polyline points="1234.2,464.4 1263.3,465.4 1297.9,466.7" fill="none" stroke="#000" stroke-width="1"/><ellipse cx="685" cy="468" rx="25" ry="2" fill="#00d0d8" stroke="#003030" stroke-width="0.8"/><polygon points="1287.7,477.5 1297.9,466.7 1299.2,466.7 1299.2,483.9 1318.8,466.7 1317.5,445.7 1328.3,434.2 1328.3,508 1320.2,514.8 1320.2,519.5 1294.5,545.9 1287.7,548" fill="#005b60" stroke="#000" stroke-width="1"/><polygon points="1299.2,467.1 1318.8,466.7 1299.2,483.9" fill="#00aeb6" stroke="#000" stroke-width="0.9"/><polyline points="1297.2,489.7 1297.2,526.3" fill="none" stroke="#000c0e" stroke-width="1.6"/><polyline points="1318.8,467.4 1318.8,504" fill="none" stroke="#000c0e" stroke-width="1.6"/><polyline points="1297.9,466.7 1299.2,466.7 1299.2,483.9" fill="none" stroke="#000" stroke-width="1"/><polygon points="613,471.5 1287.7,477.5 1287.7,548.6 1170,548.6 1167,564.7 733,561 731,546 613,546" fill="#00e1e1" stroke="#000" stroke-width="1"/><polygon points="806.7,469.6 1098.8,471.3 1098.8,494.4 1090,496 812,494.5 806.7,492.5" fill="#00c4cc" stroke="#000" stroke-width="1"/><polygon points="817.6,469.6 1090,471.3 1090,489 817.6,487" fill="#0ef9f9" stroke="#000" stroke-width="1"/><polygon points="806.7,469.6 817.6,469.6 817.6,487 812,494.5 806.7,492.5" fill="#00b8c4" stroke="#000" stroke-width="0.8"/><polyline points="817.6,487 1090,489 1090,471.3" fill="none" stroke="#000" stroke-width="1"/><polyline points="812,494.5 1090,496" fill="none" stroke="#003c40" stroke-width="0.8"/><polyline points="806.7,469.6 1098.8,471.3" fill="none" stroke="#000" stroke-width="1"/><g shape-rendering="geometricPrecision"><circle cx="764.5" cy="513.3" r="19" fill="#00ccd4" stroke="#000" stroke-width="1.2"/><circle cx="764.5" cy="513.3" r="16" fill="#00a2aa" stroke="#000" stroke-width="1"/><circle cx="766.4" cy="511.4" r="13.3" fill="url(#gcone)" stroke="#000" stroke-width="1"/></g><g shape-rendering="geometricPrecision"><circle cx="1136.5" cy="517.2" r="19.6" fill="#00ccd4" stroke="#000" stroke-width="1.2"/><circle cx="1136.5" cy="517.2" r="16.5" fill="#00a2aa" stroke="#000" stroke-width="1"/><circle cx="1138.5" cy="515.2" r="13.7" fill="url(#gcone)" stroke="#000" stroke-width="1"/></g><circle cx="660.6" cy="506.5" r="1.8" fill="#d0b000" stroke="#403000" stroke-width="0.6"/><circle cx="1205.7" cy="511.2" r="1.8" fill="#d0b000" stroke="#403000" stroke-width="0.6"/><polygon points="1231.5,518.8 1268.5,518.8 1268.5,548.6 1231.5,548.6" fill="url(#gye2)" stroke="#000" stroke-width="1"/><polygon points="1237.6,519.6 1266,519.6 1266,548.6 1237.6,548.6" fill="#00e23e" stroke="#000" stroke-width="1"/><g shape-rendering="geometricPrecision"><circle cx="1251.5" cy="536.7" r="4.2" fill="#d0b000" stroke="#141000" stroke-width="0.9"/><circle cx="1252.8" cy="535.4" r="1.3" fill="#b4a000"/></g><polygon points="1170,549 1287.7,549 1294.5,545.5 1294.5,556.5 1170,557.5" fill="#dcdc00" stroke="#000" stroke-width="1"/><polygon points="1170,549 1207.8,549 1207.8,556.5 1168,557.5" fill="url(#gye2)" stroke="#000" stroke-width="1"/><polygon points="1168,557.5 1266,557.5 1266,564.7 1168,564.7" fill="#dd8200" stroke="#000" stroke-width="1"/><polygon points="1099,566 1126.5,566 1134,564 1126.5,576.6 1099,576.6" fill="#dd8200" stroke="#000" stroke-width="1"/><polygon points="1126.5,576.6 1134,565 1243.4,565 1243.4,576.6" fill="#dcdc00" stroke="#000" stroke-width="1"/><text x="1230" y="576.5" font-family="Liberation Sans,sans-serif" font-weight="bold" font-size="10.5" fill="#000" textLength="7.8" lengthAdjust="spacingAndGlyphs">M</text><rect x="1243.400" y="566" width="10" height="10" fill="#d8d000" stroke="#000" stroke-width="0.600"/><polygon points="1294,552 1301,552 1301,612 1294,619" fill="#7a4800" stroke="#000" stroke-width="1"/><polygon points="1265,576.6 1294,576.6 1294,619 1265,619" fill="#dd8200" stroke="#000" stroke-width="1"/><polygon points="1266,557.5 1294,557.5 1294,577 1266,577" fill="#dd8200" stroke="#000" stroke-width="1"/><rect x="1243.400" y="567.500" width="120" height="8.500" fill="url(#gteal)" stroke="#001418" stroke-width="0.800"/><ellipse cx="1363.4" cy="571.8" rx="1.4" ry="4.2" fill="#005660" stroke="#001418" stroke-width="0.7"/><ellipse cx="1297.5" cy="592" rx="1" ry="5" fill="#301800"/><polygon points="850.6,571 867,571 872,557 880,554 880,584.5 850.6,584.5" fill="#e4e400" stroke="#000" stroke-width="1"/><polygon points="875.5,555.6 885,554.5 890.2,560.8 897.6,564 922.8,562.9 922.8,549.3 929.1,549.3 929.1,578.7 916.5,578.7 914.4,583.9 875.5,585" fill="#00e23e" stroke="#000" stroke-width="1"/><g shape-rendering="geometricPrecision"><circle cx="882.5" cy="562.5" r="4" fill="#b09000" stroke="#141000" stroke-width="0.9"/><circle cx="883.7" cy="561.3" r="1.3" fill="#b4a000"/></g><text x="877" y="584" font-family="Liberation Sans,sans-serif" font-weight="bold" font-size="10" fill="#000" textLength="7.4" lengthAdjust="spacingAndGlyphs">M</text><polygon points="854.5,581.2 862.5,572.8 866.5,576 858,585.5" fill="#00707c" stroke="#001418" stroke-width="0.8"/><ellipse cx="856.3" cy="583.4" rx="2.4" ry="2.9" fill="#008c98" stroke="#001418" stroke-width="0.7"/><polygon points="1031.5,562.9 1059.3,562.9 1064.5,551.4 1074,546.8 1083.4,551.4 1088.7,560.8 1099.2,564 1099.2,573.4 1109.7,573.4 1109.7,587.1 1044.6,587.1 1044.6,580.8 1031.5,580.8" fill="#00e23e" stroke="#000" stroke-width="1"/><g shape-rendering="geometricPrecision"><circle cx="1077.5" cy="555" r="4" fill="#b09000" stroke="#141000" stroke-width="0.9"/><circle cx="1078.7" cy="553.8" r="1.3" fill="#b4a000"/></g><g shape-rendering="geometricPrecision"><circle cx="1066" cy="577.5" r="2.4" fill="#b09000" stroke="#141000" stroke-width="0.9"/><circle cx="1066.7" cy="576.8" r="0.8" fill="#b4a000"/></g><g shape-rendering="geometricPrecision"><circle cx="1087.5" cy="577.5" r="2.4" fill="#b09000" stroke="#141000" stroke-width="0.9"/><circle cx="1088.2" cy="576.8" r="0.8" fill="#b4a000"/></g><polygon points="1099,564 1122,564 1122,572 1099,572" fill="#dd8200" stroke="#000" stroke-width="1"/><polygon points="1116,566 1128,566 1120,576.6 1110,576.6" fill="#e0e000" stroke="#000" stroke-width="1"/><rect x="874" y="588" width="1.800" height="17" fill="#00d040" stroke="#003010" stroke-width="0.400"/><rect x="872.6" y="603" width="4.600" height="1.600" fill="#00d040" stroke="#003010" stroke-width="0.400"/><rect x="1042" y="585" width="1.800" height="21" fill="#00d040" stroke="#003010" stroke-width="0.400"/><rect x="1040.6" y="604" width="4.600" height="1.600" fill="#00d040" stroke="#003010" stroke-width="0.400"/><rect x="1071" y="588" width="1.800" height="19" fill="#00d040" stroke="#003010" stroke-width="0.400"/><rect x="1069.6" y="605" width="4.600" height="1.600" fill="#00d040" stroke="#003010" stroke-width="0.400"/><rect x="1083" y="588" width="1.800" height="6" fill="#00d040" stroke="#003010" stroke-width="0.400"/><rect x="1081.6" y="592" width="4.600" height="1.600" fill="#00d040" stroke="#003010" stroke-width="0.400"/><polygon points="852,585 860,585 860,597 852,597" fill="#dd8200" stroke="#000" stroke-width="1"/><polygon points="1053,588 1064,588 1064,592.5 1053,592.5" fill="#dd8200" stroke="#000" stroke-width="1"/><polygon points="1056,592.5 1062.5,592.5 1062.5,605 1056,605" fill="#dd8200" stroke="#000" stroke-width="1"/><polygon points="922,548 925,548 925,560 922,562" fill="#a8a000" stroke="#000" stroke-width="0.8"/><polygon points="925,548 929,548 929,585 925,585" fill="#00e23e"/><polygon points="1026.7,549.3 1031.5,549.3 1031.5,632 1026.7,634.3" fill="#7a4800" stroke="#000" stroke-width="1"/><polygon points="929,549.3 1026.7,549.3 1026.7,634.3 992,634.3 992,627 962.7,627 962.7,634.3 929,634.3" fill="#dd8200" stroke="#000" stroke-width="1"/><polygon points="962.7,627 966,620 966,630 962.7,634.3" fill="#7a4800" stroke="#000" stroke-width="0.7"/><polygon points="992,627 989,620 989,630 992,634.3" fill="#f09a10" stroke="#000" stroke-width="0.7"/><circle cx="977.400" cy="616.900" r="10.300" fill="none" stroke="#b49c9c" stroke-width="8"/><circle cx="977.4" cy="616.9" r="14.3" fill="none" stroke="#403030" stroke-width="0.9"/><circle cx="977.4" cy="616.9" r="6.3" fill="#1c2a52" stroke="#201818" stroke-width="0.9"/><circle cx="940.6" cy="565" r="6.3" fill="#00c030" stroke="#002808" stroke-width="1"/><circle cx="940.6" cy="565" r="4" fill="#00a028" stroke="#002808" stroke-width="0.8"/><circle cx="941.4" cy="564" r="1.8" fill="#e0d000" stroke="#403000" stroke-width="0.5"/><circle cx="1015.6" cy="565.7" r="6.3" fill="#00c030" stroke="#002808" stroke-width="1"/><circle cx="1015.6" cy="565.7" r="4" fill="#00a028" stroke="#002808" stroke-width="0.8"/><circle cx="1016.4" cy="564.7" r="1.8" fill="#e0d000" stroke="#403000" stroke-width="0.5"/><g shape-rendering="geometricPrecision"><circle cx="947.6" cy="578.3" r="3" fill="#a07800" stroke="#141000" stroke-width="0.9"/><circle cx="948.5" cy="577.4" r="1" fill="#b4a000"/></g><g shape-rendering="geometricPrecision"><circle cx="1007.8" cy="578.3" r="3" fill="#a07800" stroke="#141000" stroke-width="0.9"/><circle cx="1008.7" cy="577.4" r="1" fill="#b4a000"/></g><g transform="translate(880 500)" fill="url(#gwm)" shape-rendering="auto"><path d="M11.200 17L13.400 17.600V37.400H27L27.600 39.800H11.200z"/><path d="M15 12L17.600 13V34.400Q22 36 27.600 36.600L27.200 37.800Q20 37.200 15 36.700z"/><path d="M19.200 8L22.100 10.200V31Q24 34 28.600 35.800L27.800 36.800Q21.500 35.300 19.200 33.300z"/><g transform="translate(67.500 0) scale(-1 1)"><path d="M11.200 17L13.400 17.600V37.400H27L27.600 39.800H11.200z"/><path d="M15 12L17.600 13V34.400Q22 36 27.600 36.600L27.200 37.800Q20 37.200 15 36.700z"/><path d="M19.200 8L22.100 10.200V31Q24 34 28.600 35.800L27.800 36.800Q21.500 35.300 19.200 33.300z"/></g><path d="M33.800 10.200C28 10.800 23.800 16 24.300 21.500C24.500 24 25.500 26 26.600 26.800C26.200 22 28.500 18.200 32.200 17.400V35.800C37.500 35 42 31 42.800 26.500C43.300 23.500 42 20.500 40 19.400C40.800 23 38.500 26.300 34.600 27.400V10.200z" fill="url(#gwm2)"/><rect x="28.300" y="37" width="10" height="2.400" rx="1.200" fill="#f06a18"/></g><text x="947" y="529.500" font-family="Liberation Sans,Noto Sans CJK SC,sans-serif" font-weight="bold" font-size="16.600" fill="url(#gwm)" textLength="82.500">智造资料网</text><text x="947" y="537.900" font-family="Liberation Sans,sans-serif" font-weight="bold" font-style="italic" font-size="4.600" fill="#f09028" textLength="82.500" lengthAdjust="spacingAndGlyphs">INTELLIGENT MANUFACTURING DATA</text>
<polygon points="789.5,447 807,444 828,441.5 828,455 1100,459 1108,462 1108,465.5 1000,465 870,463.5 840,461.5 789.5,460" fill="#c400c4" stroke="#000" stroke-width="0.8"/><polygon points="1089,451.5 1179,452.5 1179,456 1089,457.5" fill="#c400c4" stroke="#000" stroke-width="0.8"/><polygon points="791.9,445.8 801.8,442.8 801.8,450.7 796.8,451.1" fill="#e4e400" stroke="#000" stroke-width="0.7"/><polygon points="1124.4,443.2 1130.3,443.2 1127.3,446.8 1123.4,446.8" fill="#e4e400" stroke="#000" stroke-width="0.7"/><polygon points="827.5,454.7 1088.8,456.7 1096.7,459 1088.8,463 918.5,463 843.3,459.6 827.5,458.6" fill="#dd8200" stroke="#000" stroke-width="0.8"/><polyline points="873,459.6 873,463" fill="none" stroke="#402000" stroke-width="0.7"/><polyline points="918.5,459.6 918.5,463" fill="none" stroke="#402000" stroke-width="0.7"/><polyline points="966,459.6 966,463" fill="none" stroke="#402000" stroke-width="0.7"/><polyline points="1014.5,459.6 1014.5,463" fill="none" stroke="#402000" stroke-width="0.7"/><polyline points="1057.1,459.6 1057.1,463" fill="none" stroke="#402000" stroke-width="0.7"/><polygon points="1096.7,462.2 1106.6,460.6 1108.5,463 1101.6,466.2" fill="#dd8200" stroke="#000" stroke-width="0.7"/><polygon points="828.5,410.2 831.9,408.2 854.2,408.2 854.2,448.8 828.5,448.8" fill="#dd8200" stroke="#000" stroke-width="1"/><polygon points="828.5,410.2 831.9,408.2 854.2,408.2 851.3,410.2" fill="#a86500" stroke="#000" stroke-width="0.7"/><polygon points="845.3,420.1 849.3,418.1 872,418.1 872,453.7 845.3,453.7" fill="#dd8200" stroke="#000" stroke-width="1"/><polygon points="845.3,420.1 849.3,418.1 872,418.1 869.1,420.1" fill="#a86500" stroke="#000" stroke-width="0.7"/><polyline points="837.4,412.1 837.4,417.1" fill="none" stroke="#000" stroke-width="1.5"/><polyline points="851.3,421 851.3,425" fill="none" stroke="#000" stroke-width="1.2"/><polygon points="872,440.8 896.8,431.9 898.8,434.9 898.8,456.7 872,453.1" fill="url(#gwh2)" stroke="#000" stroke-width="1"/><polygon points="873,429 896.8,427 896.8,432.9 873,437.9" fill="#f4f4f4" stroke="#000" stroke-width="0.8"/><polyline points="875,432.9 886.9,430.9 882.9,434.9 894.8,431.9" fill="none" stroke="#000" stroke-width="0.9"/><polyline points="873,437.9 887.9,438.5 896.8,432.9" fill="none" stroke="#000" stroke-width="0.9"/><polygon points="898.2,434.9 928.4,434.9 944.3,443.8 1035.3,443.8 1044.2,436.9 1081.8,434.9 1081.8,456.7 898.2,456.7" fill="url(#gwh)" stroke="#000" stroke-width="1"/><polyline points="919.5,434.9 919.5,456.7" fill="none" stroke="#000" stroke-width="0.9"/><polyline points="927.4,434.9 927.4,456.7" fill="none" stroke="#000" stroke-width="0.9"/><polyline points="1051.1,434.9 1051.1,456.7" fill="none" stroke="#000" stroke-width="0.9"/><polyline points="1060.1,434.9 1060.1,456.7" fill="none" stroke="#000" stroke-width="0.9"/><polygon points="947.9,425.9 1028.8,425.9 1028.8,441.4 947.9,441.4" fill="#6c6c6c" stroke="#000" stroke-width="1"/><polygon points="948.9,427.1 954,427.1 950.3,440.3 948.3,440.3" fill="#f4f4f4" stroke="#000" stroke-width="0.7"/><polygon points="957,427.1 964.4,427.1 961.5,440.3 958.5,440.3" fill="#f4f4f4" stroke="#000" stroke-width="0.7"/><polygon points="967.2,427.1 977,427.1 975.6,440.3 965.5,440.3" fill="#f4f4f4" stroke="#000" stroke-width="0.7"/><polygon points="981,427.1 990.8,427.1 989.4,440.3 979.5,440.3" fill="#f4f4f4" stroke="#000" stroke-width="0.7"/><polygon points="993.6,427.1 1002.3,427.1 1000.9,440.3 997.6,440.3" fill="#f4f4f4" stroke="#000" stroke-width="0.7"/><polygon points="1006.3,427.1 1014.7,427.1 1016.4,440.3 1013,440.3" fill="#f4f4f4" stroke="#000" stroke-width="0.7"/><polygon points="1017.8,427.1 1023.4,427.1 1028.2,440.3 1021.7,440.3" fill="#f4f4f4" stroke="#000" stroke-width="0.7"/><polyline points="947.9,441.4 1028.8,441.4" fill="none" stroke="#000" stroke-width="1"/><rect x="932" y="396.3" width="99.4" height="30.7" fill="url(#ggr)" stroke="#000" stroke-width="0.900"/><rect x="930.8" y="387.8" width="104.1" height="8.5" fill="url(#gye)" stroke="#000" stroke-width="0.900"/><polygon points="915.6,404.2 932.4,404.2 932.4,415.5 915.6,415.5" fill="#00c030" stroke="#000" stroke-width="1"/><polygon points="915.6,402.2 932.4,402.2 932.4,404.8 915.6,404.8" fill="#e4e400" stroke="#000" stroke-width="0.7"/><g shape-rendering="geometricPrecision"><circle cx="926.1" cy="411.5" r="3" fill="#c0a000" stroke="#141000" stroke-width="0.9"/><circle cx="927" cy="410.6" r="1" fill="#b4a000"/></g><polygon points="897.8,417.5 947.2,417.5 947.2,440.8 944.3,443.8 928.4,434.9 897.8,434.9" fill="url(#ggr)" stroke="#000" stroke-width="1"/><polygon points="919.5,417.5 944.3,417.5 944.3,434.9 928.4,434.9 919.5,434.9" fill="#00b030" stroke="#000" stroke-width="0.8"/><polygon points="897.8,415.1 906.7,414.1 947.2,416.1 947.2,418.1 897.8,418.1" fill="#00d038" stroke="#000" stroke-width="0.8"/><polyline points="898.8,416.3 946.3,417.1" fill="none" stroke="#e4e400" stroke-width="1.3"/><polygon points="1040.3,406.2 1088.8,406.2 1088.8,418.1 1040.3,418.1" fill="#00c030" stroke="#000" stroke-width="1"/><polygon points="1040.3,403.6 1088.8,403.6 1088.8,406.8 1040.3,406.8" fill="#e4e400" stroke="#000" stroke-width="0.7"/><g shape-rendering="geometricPrecision"><circle cx="1047.6" cy="412.1" r="3" fill="#c0a000" stroke="#141000" stroke-width="0.9"/><circle cx="1048.5" cy="411.2" r="1" fill="#b4a000"/></g><polygon points="1080.8,410.2 1123.4,411.5 1123.4,432.9 1114.5,432.9 1114.5,453.7 1080.8,453.7" fill="url(#ggr)" stroke="#000" stroke-width="1"/><polygon points="1114.5,432.9 1123.4,432.9 1123.4,453.7 1114.5,453.7" fill="url(#gwh)" stroke="#000" stroke-width="1"/><polygon points="1080.8,409.2 1123.4,410.2 1123.4,412.7 1080.8,411.5" fill="#e4e400" stroke="#000" stroke-width="0.7"/><g shape-rendering="geometricPrecision"><circle cx="1089.7" cy="420.6" r="3" fill="#c0a000" stroke="#141000" stroke-width="0.9"/><circle cx="1090.6" cy="419.7" r="1" fill="#b4a000"/></g><g shape-rendering="geometricPrecision"><circle cx="1101" cy="420.6" r="3" fill="#c0a000" stroke="#141000" stroke-width="0.9"/><circle cx="1101.9" cy="419.7" r="1" fill="#b4a000"/></g><polygon points="1029.4,419.1 1080.8,419.1 1080.8,434.9 1044.2,436.9 1035.3,443.8 1029.4,440.8" fill="url(#ggr)" stroke="#000" stroke-width="1"/><polyline points="1060.1,419.1 1060.1,434.9" fill="none" stroke="#000" stroke-width="0.9"/><polygon points="1029.4,416.7 1043.2,415.1 1080.8,416.7 1080.8,419.5 1029.4,419.5" fill="#00d038" stroke="#000" stroke-width="0.8"/><polyline points="1030.4,417.9 1079.8,418.3" fill="none" stroke="#e4e400" stroke-width="1.3"/><g shape-rendering="geometricPrecision"><circle cx="1035.7" cy="425.6" r="3.5" fill="#c0a000" stroke="#141000" stroke-width="0.9"/><circle cx="1036.8" cy="424.5" r="1.1" fill="#b4a000"/></g><g shape-rendering="geometricPrecision"><circle cx="1045.6" cy="426" r="3.5" fill="#c0a000" stroke="#141000" stroke-width="0.9"/><circle cx="1046.7" cy="424.9" r="1.1" fill="#b4a000"/></g><polygon points="1083.8,427 1112.5,425 1112.5,458.6 1088.8,459.6 1083.8,456.7" fill="#00dc40" stroke="#000" stroke-width="1"/><polygon points="1083.8,427 1085.8,424.6 1112.5,423 1112.5,425.4" fill="#00b030" stroke="#000" stroke-width="0.7"/><polyline points="1088.8,428 1088.8,459" fill="none" stroke="#000" stroke-width="0.8"/><polyline points="1107.6,426 1107.6,458.6" fill="none" stroke="#000" stroke-width="0.8"/><text x="1099" y="439.3" font-family="Liberation Sans,sans-serif" font-weight="bold" font-size="6" fill="#000" textLength="4.4" lengthAdjust="spacingAndGlyphs">M</text><polygon points="820.6,379.1 825.9,379.1 825.9,434.9 820.6,434.9" fill="#00c838" stroke="#003810" stroke-width="0.7"/><polygon points="819.8,377.1 826.7,377.1 826.7,379.5 819.8,379.5" fill="#00e040" stroke="#003810" stroke-width="0.7"/><polygon points="819.4,434.9 827.1,434.9 827.1,447.8 819.4,447.8" fill="url(#gwh2)" stroke="#000" stroke-width="0.7"/><polygon points="839.4,384.4 844.3,384.4 844.3,438.9 839.4,438.9" fill="#00c838" stroke="#003810" stroke-width="0.7"/><polygon points="838.6,382.4 845.1,382.4 845.1,384.8 838.6,384.8" fill="#00e040" stroke="#003810" stroke-width="0.7"/><polygon points="838.2,438.9 845.5,438.9 845.5,448.8 838.2,448.8" fill="url(#gwh2)" stroke="#000" stroke-width="0.7"/><polygon points="855.2,389.4 859.2,389.4 859.2,447.8 855.2,447.8" fill="#00c838" stroke="#003810" stroke-width="0.7"/><polygon points="854,447.8 860.4,447.8 860.4,453.7 854,453.7" fill="url(#gwh2)" stroke="#000" stroke-width="0.7"/><polygon points="816.6,444.8 827.5,444.8 827.5,448.8 816.6,448.8" fill="#101010"/><polygon points="837.4,448.4 848.3,448.4 848.3,451.1 837.4,451.1" fill="#101010"/><polygon points="1082.2,384.4 1084.8,384.4 1084.8,417.1 1082.2,417.1" fill="#00c838" stroke="#003810" stroke-width="0.6"/><polygon points="1080.8,381.9 1086.2,381.9 1086.2,384.6 1080.8,384.6" fill="#00e040" stroke="#003810" stroke-width="0.6"/><polygon points="862,364 1088,366 1088,370.6 1071,388 846.3,386.4 846.3,382" fill="#a86500" stroke="#000" stroke-width="1"/><polygon points="846.3,382 1071,383.5 1071,388 846.3,386.4" fill="#dd8200" stroke="#000" stroke-width="0.8"/><polygon points="1071,383.5 1088,366 1088,370.6 1071,388" fill="#7a4800" stroke="#000" stroke-width="0.8"/><rect x="897" y="388" width="18" height="27" fill="url(#gpk2)"/><rect x="1053.7" y="388" width="17.3" height="27" fill="url(#gpk2)"/><polygon points="786,344.5 788.5,343.5 788.5,395.5 786,395" fill="#7a4800" stroke="#000" stroke-width="1"/><polygon points="637,344 639,342.5 788.5,343.5 786,344.8" fill="#a86500" stroke="#000" stroke-width="0.7"/><polygon points="637,344 786,344.8 786,395 637,394.5" fill="#dd8200" stroke="#000" stroke-width="1"/><circle cx="656.5" cy="357.5" r="2.9" fill="#f0a020" stroke="#000" stroke-width="1.2"/><circle cx="657.4" cy="357.6" r="1.6" fill="#c07000"/><circle cx="679" cy="357.5" r="2.9" fill="#f0a020" stroke="#000" stroke-width="1.2"/><circle cx="679.9" cy="357.6" r="1.6" fill="#c07000"/><circle cx="701.5" cy="357.5" r="2.9" fill="#f0a020" stroke="#000" stroke-width="1.2"/><circle cx="702.4" cy="357.6" r="1.6" fill="#c07000"/><circle cx="724" cy="357.5" r="2.9" fill="#f0a020" stroke="#000" stroke-width="1.2"/><circle cx="724.9" cy="357.6" r="1.6" fill="#c07000"/><circle cx="746" cy="357.5" r="2.9" fill="#f0a020" stroke="#000" stroke-width="1.2"/><circle cx="746.9" cy="357.6" r="1.6" fill="#c07000"/><circle cx="769" cy="357.5" r="2.9" fill="#f0a020" stroke="#000" stroke-width="1.2"/><circle cx="769.9" cy="357.6" r="1.6" fill="#c07000"/><circle cx="656.5" cy="383" r="2.9" fill="#f0a020" stroke="#000" stroke-width="1.2"/><circle cx="657.4" cy="383.1" r="1.6" fill="#c07000"/><circle cx="679" cy="383" r="2.9" fill="#f0a020" stroke="#000" stroke-width="1.2"/><circle cx="679.9" cy="383.1" r="1.6" fill="#c07000"/><circle cx="701.5" cy="383" r="2.9" fill="#f0a020" stroke="#000" stroke-width="1.2"/><circle cx="702.4" cy="383.1" r="1.6" fill="#c07000"/><circle cx="724" cy="383" r="2.9" fill="#f0a020" stroke="#000" stroke-width="1.2"/><circle cx="724.9" cy="383.1" r="1.6" fill="#c07000"/><circle cx="746" cy="383" r="2.9" fill="#f0a020" stroke="#000" stroke-width="1.2"/><circle cx="746.9" cy="383.1" r="1.6" fill="#c07000"/><circle cx="769" cy="383" r="2.9" fill="#f0a020" stroke="#000" stroke-width="1.2"/><circle cx="769.9" cy="383.1" r="1.6" fill="#c07000"/><circle cx="669.5" cy="370" r="3" fill="#103028" stroke="#101800" stroke-width="0.8"/><circle cx="668.7" cy="370.6" r="1.3" fill="#209040"/><circle cx="711.5" cy="370" r="3" fill="#103028" stroke="#101800" stroke-width="0.8"/><circle cx="710.7" cy="370.6" r="1.3" fill="#209040"/><circle cx="753.6" cy="370" r="3" fill="#103028" stroke="#101800" stroke-width="0.8"/><circle cx="752.8" cy="370.6" r="1.3" fill="#209040"/><polygon points="786,414.5 788.5,413.5 788.5,465.5 786,465" fill="#7a4800" stroke="#000" stroke-width="1"/><polygon points="637,414 639,412.5 788.5,413.5 786,414.8" fill="#a86500" stroke="#000" stroke-width="0.7"/><polygon points="637,414 786,414.8 786,465 637,464.5" fill="#dd8200" stroke="#000" stroke-width="1"/><circle cx="656.5" cy="427.7" r="3.7" fill="#f0a020" stroke="#000" stroke-width="1.2"/><circle cx="657.6" cy="427.8" r="2" fill="#c07000"/><circle cx="679" cy="427.7" r="3.7" fill="#f0a020" stroke="#000" stroke-width="1.2"/><circle cx="680.1" cy="427.8" r="2" fill="#c07000"/><circle cx="701.5" cy="427.7" r="3.7" fill="#f0a020" stroke="#000" stroke-width="1.2"/><circle cx="702.6" cy="427.8" r="2" fill="#c07000"/><circle cx="724" cy="427.7" r="3.7" fill="#f0a020" stroke="#000" stroke-width="1.2"/><circle cx="725.1" cy="427.8" r="2" fill="#c07000"/><circle cx="746" cy="427.7" r="3.7" fill="#f0a020" stroke="#000" stroke-width="1.2"/><circle cx="747.1" cy="427.8" r="2" fill="#c07000"/><circle cx="769" cy="427.7" r="3.7" fill="#f0a020" stroke="#000" stroke-width="1.2"/><circle cx="770.1" cy="427.8" r="2" fill="#c07000"/><circle cx="656.5" cy="452.8" r="3.7" fill="#f0a020" stroke="#000" stroke-width="1.2"/><circle cx="657.6" cy="452.9" r="2" fill="#c07000"/><circle cx="679" cy="452.8" r="3.7" fill="#f0a020" stroke="#000" stroke-width="1.2"/><circle cx="680.1" cy="452.9" r="2" fill="#c07000"/><circle cx="701.5" cy="452.8" r="3.7" fill="#f0a020" stroke="#000" stroke-width="1.2"/><circle cx="702.6" cy="452.9" r="2" fill="#c07000"/><circle cx="724" cy="452.8" r="3.7" fill="#f0a020" stroke="#000" stroke-width="1.2"/><circle cx="725.1" cy="452.9" r="2" fill="#c07000"/><circle cx="746" cy="452.8" r="3.7" fill="#f0a020" stroke="#000" stroke-width="1.2"/><circle cx="747.1" cy="452.9" r="2" fill="#c07000"/><circle cx="769" cy="452.8" r="3.7" fill="#f0a020" stroke="#000" stroke-width="1.2"/><circle cx="770.1" cy="452.9" r="2" fill="#c07000"/><circle cx="669.5" cy="440" r="3" fill="#103028" stroke="#101800" stroke-width="0.8"/><circle cx="668.7" cy="440.6" r="1.3" fill="#209040"/><circle cx="711.5" cy="440" r="3" fill="#103028" stroke="#101800" stroke-width="0.8"/><circle cx="710.7" cy="440.6" r="1.3" fill="#209040"/><circle cx="753.6" cy="440" r="3" fill="#103028" stroke="#101800" stroke-width="0.8"/><circle cx="752.8" cy="440.6" r="1.3" fill="#209040"/>
<rect x="897" y="320" width="18" height="58.500" fill="url(#gpk2)"/><rect x="1053.7" y="320" width="17.3" height="58.500" fill="url(#gpk2)"/><path d="M967 320V367a8.500 2.600 0 0 0 17 0V320z" fill="url(#gpk)"/><polygon points="846.3,382 1071,383.5 1071,388 846.3,386.4" fill="#dd8200" stroke="#000" stroke-width="0.8"/><polyline points="846.3,382 897,382.3" fill="none" stroke="#000" stroke-width="0.8"/><polyline points="915,382.4 1053.7,383.3" fill="none" stroke="#000" stroke-width="0.8"/><polygon points="1261,303 1294,268 1294,292 1261,327.5" fill="#005b60" stroke="#000" stroke-width="1"/><polygon points="1261,267 1294,267 1294,268 1261,303" fill="#005b60" stroke="#000" stroke-width="1"/><polyline points="1266,268 1267,285" fill="none" stroke="#001a1c" stroke-width="1.6"/><polyline points="1288,280 1288,290" fill="none" stroke="#001a1c" stroke-width="1.4"/><polyline points="1267,305 1267,314" fill="none" stroke="#001a1c" stroke-width="1.6"/><polygon points="650,299 1261,303 1261,327.5 650,323" fill="#00e1e1" stroke="#000" stroke-width="1"/><polygon points="650,262 1261,267 1261,303 650,299" fill="#00e1e1" stroke="#000" stroke-width="1"/><g shape-rendering="geometricPrecision"><circle cx="764" cy="279" r="9.5" fill="#00ccd4" stroke="#000" stroke-width="1"/><circle cx="764" cy="279" r="8" fill="#00a2aa" stroke="#000" stroke-width="0.8"/><circle cx="765" cy="278.1" r="6.6" fill="url(#gcone)" stroke="#000" stroke-width="0.8"/></g><g shape-rendering="geometricPrecision"><circle cx="1146" cy="282" r="9.5" fill="#00ccd4" stroke="#000" stroke-width="1"/><circle cx="1146" cy="282" r="8" fill="#00a2aa" stroke="#000" stroke-width="0.8"/><circle cx="1147" cy="281.1" r="6.6" fill="url(#gcone)" stroke="#000" stroke-width="0.8"/></g><g shape-rendering="geometricPrecision"><circle cx="764" cy="311.4" r="6.3" fill="#00ccd4" stroke="#000" stroke-width="0.8"/><circle cx="764" cy="311.4" r="5.3" fill="#00a2aa" stroke="#000" stroke-width="0.6"/><circle cx="764.6" cy="310.8" r="4.4" fill="url(#gcone)" stroke="#000" stroke-width="0.6"/></g><g shape-rendering="geometricPrecision"><circle cx="1146" cy="314" r="6.3" fill="#00ccd4" stroke="#000" stroke-width="0.8"/><circle cx="1146" cy="314" r="5.3" fill="#00a2aa" stroke="#000" stroke-width="0.6"/><circle cx="1146.6" cy="313.4" r="4.4" fill="url(#gcone)" stroke="#000" stroke-width="0.6"/></g><g shape-rendering="geometricPrecision"><circle cx="803.6" cy="287" r="3.6" fill="#948200" stroke="#141000" stroke-width="0.9"/><circle cx="804.7" cy="285.9" r="1.2" fill="#b4a000"/></g><g shape-rendering="geometricPrecision"><circle cx="803.6" cy="312" r="3.6" fill="#948200" stroke="#141000" stroke-width="0.9"/><circle cx="804.7" cy="310.9" r="1.2" fill="#b4a000"/></g><g shape-rendering="geometricPrecision"><circle cx="934" cy="288" r="3.6" fill="#948200" stroke="#141000" stroke-width="0.9"/><circle cx="935.1" cy="286.9" r="1.2" fill="#b4a000"/></g><g shape-rendering="geometricPrecision"><circle cx="979" cy="288.5" r="3.6" fill="#948200" stroke="#141000" stroke-width="0.9"/><circle cx="980.1" cy="287.4" r="1.2" fill="#b4a000"/></g><g shape-rendering="geometricPrecision"><circle cx="1126" cy="289.5" r="3.6" fill="#948200" stroke="#141000" stroke-width="0.9"/><circle cx="1127.1" cy="288.4" r="1.2" fill="#b4a000"/></g><g shape-rendering="geometricPrecision"><circle cx="934" cy="312.7" r="3.6" fill="#948200" stroke="#141000" stroke-width="0.9"/><circle cx="935.1" cy="311.6" r="1.2" fill="#b4a000"/></g><g shape-rendering="geometricPrecision"><circle cx="979" cy="313" r="3.6" fill="#948200" stroke="#141000" stroke-width="0.9"/><circle cx="980.1" cy="311.9" r="1.2" fill="#b4a000"/></g><g shape-rendering="geometricPrecision"><circle cx="1126" cy="314" r="3.6" fill="#948200" stroke="#141000" stroke-width="0.9"/><circle cx="1127.1" cy="312.9" r="1.2" fill="#b4a000"/></g><polygon points="453,182 1351,189.5 1312,233 413,226" fill="#00b1b1" stroke="#000" stroke-width="1"/><polygon points="1312,233 1351,189.5 1351,225 1312,267" fill="#005b60" stroke="#000" stroke-width="1"/><polygon points="413,226 1312,233 1312,267 413,260" fill="#00e1e1" stroke="#000" stroke-width="1"/><polyline points="1319,232 1319,250" fill="none" stroke="#000c0e" stroke-width="1.6"/><polyline points="1343,207 1343,225" fill="none" stroke="#000c0e" stroke-width="1.6"/><ellipse cx="981.5" cy="208.3" rx="52" ry="3.6" fill="#e8e800" stroke="#303000" stroke-width="0.8"/><ellipse cx="981.5" cy="209.3" rx="44" ry="2.2" fill="#a8a800"/><rect x="740" y="188.5" width="36" height="2" fill="#00080a"/><rect x="752" y="191" width="10" height="2" fill="#00080a"/><rect x="702" y="198" width="24" height="2" fill="#00080a"/><rect x="740" y="198" width="19" height="2" fill="#00080a"/><rect x="695" y="205" width="24" height="2" fill="#00080a"/><rect x="689" y="212.5" width="24" height="2" fill="#00080a"/><rect x="726" y="212.5" width="19" height="2" fill="#00080a"/><rect x="681" y="220" width="25" height="2" fill="#00080a"/><rect x="709" y="222.5" width="37" height="2" fill="#00080a"/><ellipse cx="758" cy="189.5" rx="17" ry="1.6" fill="#00d8e0" stroke="#002428" stroke-width="0.7"/><ellipse cx="693" cy="220.5" rx="11" ry="1.4" fill="#00d8e0" stroke="#002428" stroke-width="0.7"/><ellipse cx="727" cy="222.5" rx="13" ry="2" fill="#00d8e0" stroke="#002428" stroke-width="0.7"/><rect x="1199" y="192.5" width="36" height="2" fill="#00080a"/><rect x="1239" y="195" width="24" height="2" fill="#00080a"/><rect x="1199" y="202.5" width="19" height="2" fill="#00080a"/><rect x="1232" y="203" width="22" height="2" fill="#00080a"/><rect x="1225" y="210" width="22" height="2" fill="#00080a"/><rect x="1186" y="216.5" width="19" height="2" fill="#00080a"/><rect x="1218" y="217" width="23" height="2" fill="#00080a"/><rect x="1168" y="225" width="36" height="2" fill="#00080a"/><rect x="1211" y="224.5" width="24" height="2" fill="#00080a"/><ellipse cx="1217" cy="193" rx="16" ry="2" fill="#00d8e0" stroke="#002428" stroke-width="0.7"/><ellipse cx="1186" cy="226" rx="15" ry="2" fill="#00d8e0" stroke="#002428" stroke-width="0.7"/><g shape-rendering="geometricPrecision"><circle cx="770.8" cy="245.5" r="9.6" fill="#00ccd4" stroke="#000" stroke-width="1"/><circle cx="770.8" cy="245.5" r="8.1" fill="#00a2aa" stroke="#000" stroke-width="0.8"/><circle cx="771.8" cy="244.5" r="6.7" fill="url(#gcone)" stroke="#000" stroke-width="0.8"/></g><g shape-rendering="geometricPrecision"><circle cx="1132.6" cy="248" r="9.6" fill="#00ccd4" stroke="#000" stroke-width="1"/><circle cx="1132.6" cy="248" r="8.1" fill="#00a2aa" stroke="#000" stroke-width="0.8"/><circle cx="1133.6" cy="247" r="6.7" fill="url(#gcone)" stroke="#000" stroke-width="0.8"/></g><circle cx="661.7" cy="245.5" r="1.6" fill="#d0b000" stroke="#403000" stroke-width="0.6"/><circle cx="1206" cy="250" r="1.6" fill="#d0b000" stroke="#403000" stroke-width="0.6"/>
<rect x="121" y="916.400" width="24.300" height="24.200" fill="rgba(200,210,235,0.250)" stroke="#c8ccd8" stroke-width="0.800"/><polyline points="119.8,942 119.8,876" fill="none" stroke="#00d8e8" stroke-width="2.2"/><polygon points="119.8,866.5 123.8,877 115.8,877" fill="#20e8f0"/><polyline points="119.8,942 160,942" fill="none" stroke="#00c800" stroke-width="2.2"/><polyline points="122,943.2 145,943.2" fill="none" stroke="#e0e000" stroke-width="1"/><polygon points="170.6,942 159.4,938 159.4,946" fill="#00b000"/><circle cx="117.7" cy="943.2" r="3.6" fill="#c81010" stroke="#600000" stroke-width="0.6"/><g font-family="Liberation Sans,sans-serif" font-size="11.500" fill="#d8d8d8"><text x="115.600" y="863.800">Z</text><text x="172" y="946.500">Y</text><text x="112.500" y="947.500" font-size="10">X</text></g>
</svg><svg class="abs" style="left:1660px;top:676px" width="200" height="135" viewBox="1720 785 200 135" font-family="Liberation Sans,sans-serif"><defs><linearGradient id="mring" x1="0" x2="0" y1="0" y2="1"><stop offset="0" stop-color="#30d8c0"/><stop offset="0.600" stop-color="#70d880"/><stop offset="1" stop-color="#e8d840"/></linearGradient></defs><rect x="1747" y="793.500" width="157" height="70.500" rx="9" fill="#b4d8f2" opacity="0.920"/><rect x="1750" y="795.500" width="151" height="5" rx="2" fill="#1c88cc" opacity="0.700"/><rect x="1731" y="799.500" width="170.500" height="59" rx="9" fill="#fff" stroke="#1384cc" stroke-width="1.400"/><text x="1743.500" y="825" font-size="21" font-weight="bold" fill="#000">A</text><path d="M1781 809.500a9 9 0 1 1-6.500 14a7.500 7.500 0 0 0 6.500-14z" fill="#000"/><path d="M1746 836.500h2.200l-1.200 4h-1.400z" fill="#000"/><rect x="1758" y="848.500" width="2.200" height="2.200" fill="#000"/><path d="M1772.500 838.500l4.500-1.500c1.500 1.500 6 1.500 7.500 0l4.500 1.500 1.500 5-3.500 1v7.500h-12.500v-7.500l-3.500-1z" fill="#000"/><path d="M1835 850c10-22 45-28 62-8c6 8 14 14 18 18l-4 3c-20 4-60 3-78-2z" fill="#0a98e4" stroke="#065a8c" stroke-width="0.600"/><circle cx="1893.600" cy="822.400" r="5" fill="#e8102a" stroke="#fff" stroke-width="0.600"/><ellipse cx="1909" cy="851.500" rx="9" ry="7.500" fill="#fff" stroke="#888" stroke-width="0.500" transform="rotate(35 1909 851.500)"/><path d="M1828 853c8 6 20 7 28 4" stroke="#d01020" stroke-width="3" fill="none"/><circle cx="1840.500" cy="826.500" r="33" fill="#0a98e4" stroke="#065a8c" stroke-width="0.700"/><circle cx="1836" cy="832.500" r="28.500" fill="#fff" stroke="#555" stroke-width="0.500"/><ellipse cx="1835.500" cy="803.500" rx="7.500" ry="8.500" fill="#fff" stroke="#444" stroke-width="0.600" transform="rotate(-15 1835.500 803.500)"/><ellipse cx="1849.500" cy="809.500" rx="7.500" ry="8.500" fill="#fff" stroke="#444" stroke-width="0.600" transform="rotate(20 1849.500 809.500)"/><path d="M1833 805.500c1.500 2 3.500 2 5 0.500" stroke="#222" stroke-width="1" fill="none"/><ellipse cx="1844" cy="810" rx="1.600" ry="2.300" fill="#111"/><circle cx="1835" cy="814.300" r="4.600" fill="#e8102a"/><circle cx="1836.300" cy="813" r="1.300" fill="#fff"/><path d="M1833.500 819c-3 8-6 18-8 26M1812 838c10 12 40 16 52 -2" stroke="#555" stroke-width="0.600" fill="none"/><path d="M1810 808l14 6M1808 818l15 2M1811 830l13-4M1861 822l-15 3M1862 832l-16-1M1858 843l-13-7" stroke="#555" stroke-width="0.600" fill="none"/><circle cx="1815" cy="843" r="7.500" fill="#fff" stroke="#777" stroke-width="0.500"/><circle cx="1846.600" cy="853" r="8.500" fill="#fff" stroke="#777" stroke-width="0.500"/><circle cx="1834" cy="858.500" r="4.500" fill="#e8c820" stroke="#806800" stroke-width="0.500"/><path d="M1837 863.500h46a20 20 0 0 1 0 40h-46z" fill="#222a3e" opacity="0.960"/><path d="M1840 883h62" stroke="#343c52" stroke-width="1"/><circle cx="1813.700" cy="883" r="29" fill="#2b3449" stroke="#4a5470" stroke-width="1.200" opacity="0.970"/><path d="M1813.700 857a26 26 0 1 1-9 50.400" fill="none" stroke="url(#mring)" stroke-width="1.600"/><text x="1796" y="891" font-size="27" fill="#eef0f4" style="font-weight:300" textLength="27" lengthAdjust="spacingAndGlyphs">56</text><text x="1824" y="891" font-size="11" fill="#eef0f4">%</text><path d="M1849.300 877v-8M1846 872.300l3.300-3.500 3.300 3.500" stroke="#38a0e8" stroke-width="1.400" fill="none"/><path d="M1849.300 888v8M1846 892.700l3.300 3.500 3.300-3.500" stroke="#28b030" stroke-width="1.400" fill="none"/><text x="1862.500" y="876" font-size="11.500" font-weight="bold" fill="#f0f2f6">0.2<tspan font-size="9.500" font-weight="normal" fill="#c8ccd8">K/s</tspan></text><text x="1862.500" y="897.500" font-size="11.500" font-weight="bold" fill="#f0f2f6">2.2<tspan font-size="9.500" font-weight="normal" fill="#c8ccd8">K/s</tspan></text></svg></div>
<div id="sb1" class="abs">
<div class="abs" style="left:1341px;top:1px;width:132px;height:17px;background:#fff"></div>
<svg class="abs" style="left:1458px;top:2px" width="14" height="14" viewBox="0 0 14 14" fill="none" stroke="#3a67b0" stroke-width="1.6"><circle cx="8.500" cy="5.500" r="3.600" fill="#eaf2ff"/><path d="M6 8.500L1.500 13"/></svg>
<div class="vsep" style="left:1336px;top:2px;height:16px"></div><div class="vsep" style="left:1475px;top:2px;height:16px"></div><div class="vsep" style="left:1657px;top:2px;height:16px"></div>
<span style="left:1486px;top:1px">绝对 XY 上视图</span>
<div class="sbsep" style="left:1592px;top:2px"></div>
<span style="left:1601px;top:1px">绝对视图</span>
<span style="left:1668px;top:1px;font-weight:bold">LAYER0</span>
<div class="sbsep" style="left:1726px;top:2px"></div><div class="sbsep" style="left:1755px;top:2px"></div><div class="sbsep" style="left:1798px;top:2px"></div><div class="sbsep" style="left:1842px;top:2px"></div><div class="sbsep" style="left:1886px;top:2px"></div>
<div class="abs" style="left:1762px;top:3px;width:32px;height:12px;background:#3f5f93"></div>
<div class="abs" style="left:1805px;top:3px;width:32px;height:12px;background:#3f5f93"></div>
<div class="abs" style="left:1848px;top:3px;width:32px;height:12px;background:#3f5f93"></div>
<svg class="abs" style="left:1893px;top:0px" width="16" height="16" viewBox="0 0 16 16"><circle cx="8" cy="8" r="6.500" fill="#1c3fb0"/><path d="M4 4c2-2 5-2 6 0s-1 3-2 4-1 3-2 3-2-2-3-3 0-3 1-4z" fill="#2fb02f"/><path d="M11 8c1 0 2 1 2 2s-1 2-2 2-1-3 0-4z" fill="#2fb02f"/><circle cx="8" cy="8" r="6.500" fill="none" stroke="#0c1d60" stroke-width="0.800"/></svg>
</div>
<div id="sb2" class="abs">
<div class="sbsep" style="left:1133px;top:3px"></div>
<div class="sbsep" style="left:1175px;top:3px"></div>
<div class="sbsep" style="left:1206px;top:3px"></div>
<div class="sbsep" style="left:1237px;top:3px"></div>
<div class="sbsep" style="left:1268px;top:3px"></div>
<div class="sbsep" style="left:1299px;top:3px"></div>
<div class="sbsep" style="left:1330px;top:3px"></div>
<div class="sbsep" style="left:1361px;top:3px"></div>
<div class="sbsep" style="left:1392px;top:3px"></div>
<div class="sbsep" style="left:1423px;top:3px"></div>
<div class="sbsep" style="left:1454px;top:3px"></div>
<div class="sbsep" style="left:1579px;top:3px"></div>
<div class="sbsep" style="left:1653px;top:3px"></div>
<span style="left:1141px;top:3px">拴牢</span>
<span style="left:1463px;top:3px">LS: 1.00 PS: 1.00</span>
<span style="left:1589px;top:3px">单位: 毫米</span>
<span style="left:1663px;top:3px;color:#e8141c;letter-spacing:0.5px">X =-4464.613</span>
<span style="left:1746px;top:3px;letter-spacing:0.37px">Y = 0365.964 Z = 0000.000</span>
</div>
<div id="task" class="abs"><div class="abs" style="left:345px;top:0;width:44px;height:8px;background:#625a50"></div><div class="abs" style="left:389px;top:0;width:2px;height:8px;background:#2a241e"></div><div class="abs" style="left:1816px;top:4px;font-size:12px;line-height:12px;color:#fff;white-space:nowrap">16:08</div></div><svg class="abs" style="left:0;top:0" width="330" height="23" viewBox="0 0 330 23"><rect x="2" y="3.400" width="16" height="14.600" fill="#7ab92e"/><rect x="2" y="3.400" width="16" height="7" fill="#8cc63e"/><text x="10.200" y="16.300" font-family="Liberation Sans,sans-serif" font-weight="bold" font-size="14.500" text-anchor="middle" fill="#fff">V</text><circle cx="6" cy="5.800" r="0.900" fill="#fff"/><path d="M20.500 6v12M312.500 6v12" stroke="#a0a0a0" stroke-width="1"/><path d="M33.500 4.500h8.500l4 4v11h-12.500z" fill="#eaf0ff" stroke="#000" stroke-width="1.300"/><path d="M36 11h8v7h-8z" fill="#c4d4f8" opacity="0.800"/><path d="M42 4.500v4h4" fill="#fff" stroke="#000" stroke-width="1"/><path d="M56 9h6l1 1.500h6v9h-13z" fill="#e8b840" stroke="#a07818" stroke-width="0.700"/><path d="M56 19.500l2.500-7.500h13.500l-3 7.500z" fill="#fad870" stroke="#a07818" stroke-width="0.700"/><path d="M61 9.500c1-5 6-6 8.500-3.500l1.500-1.500 0.500 6-6-0.500 1.600-1.500c-1.500-1.500-4-1-4 1.500z" fill="#2ab02a" stroke="#107010" stroke-width="0.500"/><path d="M80 4h4l1 1h4v5h-9z" fill="#f0cc60" stroke="#a88820" stroke-width="0.600"/><path d="M80 12h4l1 1h4v6h-9z" fill="#f0cc60" stroke="#a88820" stroke-width="0.600"/><path d="M84.500 7h6M84.500 15.500h6" stroke="#50c050" stroke-width="1"/><path d="M89.500 6.500h4.500l2.500 2.500v9h-7z" fill="#e4ecff" stroke="#5070b0" stroke-width="0.900"/><g transform="translate(103 4) scale(1.03125)"><path d="M0.500 0.500h15v15h-15z" fill="#4a68b0" stroke="#283c78" stroke-width="1"/><path d="M2.500 0.800h11v8h-11z" fill="#f4f4f4"/><path d="M2.500 0.800h11v2h-11z" fill="#e04030"/><path d="M3.500 5h9M3.500 7h9" stroke="#b0b0b0" stroke-width="0.800"/><path d="M4 11h8v4.500h-8z" fill="#c8d0e0"/><path d="M5 11.800h2.200v3h-2.200z" fill="#283c78"/></g><g transform="translate(133 4) scale(0.6875)"><path d="M0.500 0.500h15v15h-15z" fill="#4a68b0" stroke="#283c78" stroke-width="1"/><path d="M2.500 0.800h11v8h-11z" fill="#f4f4f4"/><path d="M2.500 0.800h11v2h-11z" fill="#e04030"/><path d="M3.500 5h9M3.500 7h9" stroke="#b0b0b0" stroke-width="0.800"/><path d="M4 11h8v4.500h-8z" fill="#c8d0e0"/><path d="M5 11.800h2.200v3h-2.200z" fill="#283c78"/></g><g transform="translate(127 10) scale(0.6875)"><path d="M0.500 0.500h15v15h-15z" fill="#4a68b0" stroke="#283c78" stroke-width="1"/><path d="M2.500 0.800h11v8h-11z" fill="#f4f4f4"/><path d="M2.500 0.800h11v2h-11z" fill="#e04030"/><path d="M3.500 5h9M3.500 7h9" stroke="#b0b0b0" stroke-width="0.800"/><path d="M4 11h8v4.500h-8z" fill="#c8d0e0"/><path d="M5 11.800h2.200v3h-2.200z" fill="#283c78"/></g><g transform="translate(150 2) scale(0.6875)"><path d="M0.500 0.500h15v15h-15z" fill="#4a68b0" stroke="#283c78" stroke-width="1"/><path d="M2.500 0.800h11v8h-11z" fill="#f4f4f4"/><path d="M2.500 0.800h11v2h-11z" fill="#e04030"/><path d="M3.500 5h9M3.500 7h9" stroke="#b0b0b0" stroke-width="0.800"/><path d="M4 11h8v4.500h-8z" fill="#c8d0e0"/><path d="M5 11.800h2.200v3h-2.200z" fill="#283c78"/></g><path d="M163.5 10l5.5 2.75l-5.5 2.75l-5.5 -2.75z" fill="#c8c8c8" stroke="#222" stroke-width="0.7"/><path d="M158 12.75l5.5 2.75v5.5l-5.5 -2.75z" fill="#8a8a8a" stroke="#222" stroke-width="0.7"/><path d="M169 12.75l-5.5 2.75v5.5l5.5 -2.75z" fill="#6e6e6e" stroke="#222" stroke-width="0.7"/><path d="M163 9c2-3 5-3 5.500 0l1.500-0.500-1.500 3.500-3-2 1.500-0.500c-0.500-1.500-2-1.500-3 0z" fill="#30b030" stroke="#107010" stroke-width="0.400" transform="rotate(-40 166 8)"/><path d="M178.500 4h10v8h-10z" fill="#f4f8ff" stroke="#8090a8" stroke-width="0.700"/><path d="M183.500 4.500l3 3h-2v3h-2v-3h-2z" fill="#20b020"/><path d="M175.500 12h16.500v6.500h-16.500z" fill="#e0e0e0" stroke="#707070" stroke-width="0.800"/><path d="M177 18.500h13.500v1.500h-13.500z" fill="#a0a0a0"/><path d="M178 14.500h11" stroke="#fff" stroke-width="1.200"/><circle cx="207" cy="11.500" r="9" fill="#6a9a3a" stroke="#48701e" stroke-width="0.800"/><path d="M209.5 14.0L216 20.5" stroke="#9a9a9a" stroke-width="3" stroke-linecap="round"/><path d="M209.5 14.0L216 20.5" stroke="#e4e4e4" stroke-width="1.200" stroke-linecap="round"/><circle cx="206" cy="10.5" r="5" fill="#cfe0f4" stroke="#5d83b8" stroke-width="1.400"/><circle cx="206.5" cy="11.0" r="2.75" fill="#a8c4e4"/><g transform="translate(224 4) scale(1 1)"><path d="M0.500 6.500L7.500 0.500V4C13 4 15.500 8.500 13 14.500C12.500 10.500 10.500 9 7.500 9V12.500z" fill="#a8a8a8" stroke="#787878" stroke-width="0.700"/></g><g transform="translate(262 4) scale(-1 1)"><path d="M0.500 6.500L7.500 0.500V4C13 4 15.500 8.500 13 14.500C12.500 10.500 10.500 9 7.500 9V12.500z" fill="#a8a8a8" stroke="#787878" stroke-width="0.700"/></g><g transform="translate(273 3) scale(1 1)"><path d="M0.500 6.500L7.500 0.500V4C13 4 15.500 8.500 13 14.500C12.500 10.500 10.500 9 7.500 9V12.500z" fill="#5a8fd8" stroke="#2a58a8" stroke-width="0.700"/></g><path d="M270.500 11h5l-2 4 2 4.500h-5l2-4.500z" fill="#d8c080" stroke="#6a5018" stroke-width="0.800"/><path d="M270 11h6M270 19.500h6" stroke="#6a5018" stroke-width="1.200"/><path d="M295 10h7M295.500 12h6l-3 3.200z" stroke="#000" stroke-width="0.800" fill="#000"/></svg>
<div class="hl" style="left:125px;top:66px;width:24px;height:24px"></div>
<div class="hl" style="left:401px;top:66px;width:24px;height:24px"></div>
<svg class="abs" style="left:0;top:65px" width="1320" height="28" viewBox="0 65 1320 28"><defs><linearGradient id="icb" x1="0" x2="1" y1="0" y2="0"><stop offset="0" stop-color="#7aa4e8"/><stop offset="0.400" stop-color="#5a84d0"/><stop offset="1" stop-color="#1c3478"/></linearGradient></defs><g transform="translate(23 68.5)"><path d="M1 2l8-1 3 1.500-8 1z" fill="#8aa0f0" stroke="#4458c0" stroke-width="0.500"/><path d="M1 4.500l8-1 3 1.500-8 1z" fill="#dfe6ff" stroke="#6878c0" stroke-width="0.500"/><path d="M1 7l8-1 3 1.500-8 1z" fill="#f4f4f4" stroke="#8890a8" stroke-width="0.500"/><ellipse cx="10" cy="14" rx="8" ry="4.600" fill="#c89878" stroke="#7a4a30" stroke-width="0.700"/><circle cx="6" cy="14.500" r="1.700" fill="#2040e0"/><circle cx="10.500" cy="15.500" r="1.700" fill="#20b030"/><circle cx="14" cy="12.800" r="1.700" fill="#e02020"/><path d="M18.500 1L11 11.500" stroke="#b06a20" stroke-width="1.800"/><path d="M11.800 10.500l-2 3" stroke="#503010" stroke-width="1.800"/></g><g transform="translate(49 68.5)"><path d="M5 2h7l3 3v8h-10z" fill="#dfe8fa" stroke="#202840" stroke-width="1"/><path d="M9 0.500h7l2.500 2.500v9h-3" fill="#7a9adc" stroke="#202840" stroke-width="1"/><g transform="translate(0.5 9.5) scale(1.0625)"><path d="M0 7.500C3 9.500 12 9.800 16 6" fill="none" stroke="#8088a8" stroke-width="1.400" opacity="0.600"/><path d="M0 7C3 1.500 12 0.500 16 5.500C12 8.500 4 9 0 7z" fill="#d4d8ea" stroke="#4a5070" stroke-width="0.600"/><circle cx="8.300" cy="4.900" r="3.300" fill="#40559a"/><circle cx="8.300" cy="4.900" r="1.500" fill="#141a38"/><circle cx="9.400" cy="3.800" r="0.800" fill="#fff"/><path d="M0 7C3 0.800 12 -0.200 16 5.500" fill="none" stroke="#23253f" stroke-width="1.900"/><path d="M3 2.300l-1.100-1.600M5.500 1.200l-0.600-1.700M8.500 0.700l0-1.600M11.500 1.200l0.800-1.600M13.800 2.800l1.100-1.400" stroke="#23253f" stroke-width="0.700"/></g></g><g transform="translate(75 68.5)"><g transform="translate(1 1) scale(1.0625)"><path d="M0 7.500C3 9.500 12 9.800 16 6" fill="none" stroke="#8088a8" stroke-width="1.400" opacity="0.600"/><path d="M0 7C3 1.500 12 0.500 16 5.500C12 8.500 4 9 0 7z" fill="#d4d8ea" stroke="#4a5070" stroke-width="0.600"/><circle cx="8.300" cy="4.900" r="3.300" fill="#40559a"/><circle cx="8.300" cy="4.900" r="1.500" fill="#141a38"/><circle cx="9.400" cy="3.800" r="0.800" fill="#fff"/><path d="M0 7C3 0.800 12 -0.200 16 5.500" fill="none" stroke="#23253f" stroke-width="1.900"/><path d="M3 2.300l-1.100-1.600M5.500 1.200l-0.600-1.700M8.500 0.700l0-1.600M11.500 1.200l0.800-1.600M13.800 2.800l1.100-1.400" stroke="#23253f" stroke-width="0.700"/></g><path d="M1.0 14.5h7M4.5 11.0v7" stroke="#35d020" stroke-width="2.2" fill="none"/><path d="M10.5 11l3.500 3.500M13.0 11.5a2.800 2.800 0 1 1 2 4.800" stroke="#3a78d8" stroke-width="1.500" fill="none"/></g><g transform="translate(101 68.5)"><g transform="translate(1 1) scale(1.0625)"><path d="M0 7.500C3 9.500 12 9.800 16 6" fill="none" stroke="#8088a8" stroke-width="1.400" opacity="0.600"/><path d="M0 7C3 1.500 12 0.500 16 5.500C12 8.500 4 9 0 7z" fill="#d4d8ea" stroke="#4a5070" stroke-width="0.600"/><circle cx="8.300" cy="4.900" r="3.300" fill="#40559a"/><circle cx="8.300" cy="4.900" r="1.500" fill="#141a38"/><circle cx="9.400" cy="3.800" r="0.800" fill="#fff"/><path d="M0 7C3 0.800 12 -0.200 16 5.500" fill="none" stroke="#23253f" stroke-width="1.900"/><path d="M3 2.300l-1.100-1.600M5.500 1.200l-0.600-1.700M8.500 0.700l0-1.600M11.500 1.200l0.800-1.600M13.800 2.800l1.100-1.400" stroke="#23253f" stroke-width="0.700"/></g><path d="M1.0 15h8" stroke="#e8e000" stroke-width="2.2" fill="none"/><path d="M11 11l3.500 3.500M13.5 11.5a2.800 2.800 0 1 1 2 4.800" stroke="#3a78d8" stroke-width="1.500" fill="none"/></g><g transform="translate(127 68.5)"><g transform="translate(2 0) scale(1.0)"><path d="M0 7.500C3 9.500 12 9.800 16 6" fill="none" stroke="#8088a8" stroke-width="1.400" opacity="0.600"/><path d="M0 7C3 1.500 12 0.500 16 5.500C12 8.500 4 9 0 7z" fill="#d4d8ea" stroke="#4a5070" stroke-width="0.600"/><circle cx="8.300" cy="4.900" r="3.300" fill="#40559a"/><circle cx="8.300" cy="4.900" r="1.500" fill="#141a38"/><circle cx="9.400" cy="3.800" r="0.800" fill="#fff"/><path d="M0 7C3 0.800 12 -0.200 16 5.500" fill="none" stroke="#23253f" stroke-width="1.900"/><path d="M3 2.300l-1.100-1.600M5.500 1.200l-0.600-1.700M8.500 0.700l0-1.600M11.500 1.200l0.800-1.600M13.800 2.800l1.100-1.400" stroke="#23253f" stroke-width="0.700"/></g><rect x="2.5" y="6" width="6.500" height="13" rx="2.500" fill="#141414"/><circle cx="5.75" cy="9.6" r="2.200" fill="#e8c000"/><circle cx="5.75" cy="15.2" r="2.200" fill="#10c020"/><rect x="11.5" y="6" width="6.500" height="13" rx="2.500" fill="#141414"/><circle cx="14.75" cy="9.6" r="2.200" fill="#e01010"/><circle cx="14.75" cy="15.2" r="2.200" fill="#e8a000"/></g><g transform="translate(153 68.5)"><g transform="translate(1 0.5) scale(1.0625)"><path d="M0 7.500C3 9.500 12 9.800 16 6" fill="none" stroke="#8088a8" stroke-width="1.400" opacity="0.600"/><path d="M0 7C3 1.500 12 0.500 16 5.500C12 8.500 4 9 0 7z" fill="#d4d8ea" stroke="#4a5070" stroke-width="0.600"/><circle cx="8.300" cy="4.900" r="3.300" fill="#40559a"/><circle cx="8.300" cy="4.900" r="1.500" fill="#141a38"/><circle cx="9.400" cy="3.800" r="0.800" fill="#fff"/><path d="M0 7C3 0.800 12 -0.200 16 5.500" fill="none" stroke="#23253f" stroke-width="1.900"/><path d="M3 2.300l-1.100-1.600M5.500 1.200l-0.600-1.700M8.500 0.700l0-1.600M11.500 1.200l0.800-1.600M13.800 2.800l1.100-1.400" stroke="#23253f" stroke-width="0.700"/></g><path d="M4.52 12.52A5.50 5.50 0 0 1 14.21 9.46" fill="none" stroke="#30a828" stroke-width="2.8"/><path d="M16.89 7.21L11.53 11.71L17.59 13.49z" fill="#30a828"/><path d="M15.48 13.48A5.50 5.50 0 0 1 5.79 16.54" fill="none" stroke="#e0d010" stroke-width="2.8"/><path d="M3.11 18.79L8.47 14.29L2.41 12.51z" fill="#e0d010"/></g><g transform="translate(179 68.5)"><g transform="translate(1 1) scale(1.0625)"><path d="M0 7.500C3 9.500 12 9.800 16 6" fill="none" stroke="#8088a8" stroke-width="1.400" opacity="0.600"/><path d="M0 7C3 1.500 12 0.500 16 5.500C12 8.500 4 9 0 7z" fill="#d4d8ea" stroke="#4a5070" stroke-width="0.600"/><circle cx="8.300" cy="4.900" r="3.300" fill="#40559a"/><circle cx="8.300" cy="4.900" r="1.500" fill="#141a38"/><circle cx="9.400" cy="3.800" r="0.800" fill="#fff"/><path d="M0 7C3 0.800 12 -0.200 16 5.500" fill="none" stroke="#23253f" stroke-width="1.900"/><path d="M3 2.300l-1.100-1.600M5.500 1.200l-0.600-1.700M8.500 0.700l0-1.600M11.500 1.200l0.800-1.600M13.800 2.800l1.100-1.400" stroke="#23253f" stroke-width="0.700"/></g><path d="M1.25 12.5h6.5M4.5 9.25v6.5" stroke="#35d020" stroke-width="2.2" fill="none"/><path d="M11 10l-4.500 8" stroke="#222" stroke-width="1.200"/><path d="M10.0 16.5h7" stroke="#e8e000" stroke-width="2.2" fill="none"/></g><g transform="translate(205 68.5)"><g transform="translate(1 1) scale(1.0625)"><path d="M0 7.500C3 9.500 12 9.800 16 6" fill="none" stroke="#8088a8" stroke-width="1.400" opacity="0.600"/><path d="M0 7C3 1.500 12 0.500 16 5.500C12 8.500 4 9 0 7z" fill="#d4d8ea" stroke="#4a5070" stroke-width="0.600"/><circle cx="8.300" cy="4.900" r="3.300" fill="#40559a"/><circle cx="8.300" cy="4.900" r="1.500" fill="#141a38"/><circle cx="9.400" cy="3.800" r="0.800" fill="#fff"/><path d="M0 7C3 0.800 12 -0.200 16 5.500" fill="none" stroke="#23253f" stroke-width="1.900"/><path d="M3 2.300l-1.100-1.600M5.500 1.200l-0.600-1.700M8.500 0.700l0-1.600M11.500 1.200l0.800-1.600M13.800 2.800l1.100-1.400" stroke="#23253f" stroke-width="0.700"/></g><path d="M5.75 14h8.5M10 9.75v8.5" stroke="#35d020" stroke-width="2.6" fill="none"/></g><g transform="translate(231 68.5)"><g transform="translate(1 1) scale(1.0625)"><path d="M0 7.500C3 9.500 12 9.800 16 6" fill="none" stroke="#8088a8" stroke-width="1.400" opacity="0.600"/><path d="M0 7C3 1.500 12 0.500 16 5.500C12 8.500 4 9 0 7z" fill="#d4d8ea" stroke="#4a5070" stroke-width="0.600"/><circle cx="8.300" cy="4.900" r="3.300" fill="#40559a"/><circle cx="8.300" cy="4.900" r="1.500" fill="#141a38"/><circle cx="9.400" cy="3.800" r="0.800" fill="#fff"/><path d="M0 7C3 0.800 12 -0.200 16 5.500" fill="none" stroke="#23253f" stroke-width="1.900"/><path d="M3 2.300l-1.100-1.600M5.500 1.200l-0.600-1.700M8.500 0.700l0-1.600M11.500 1.200l0.800-1.600M13.800 2.800l1.100-1.400" stroke="#23253f" stroke-width="0.700"/></g><path d="M5.5 14h10" stroke="#e8e000" stroke-width="2.6" fill="none"/></g><g transform="translate(273 68.5)"><path d="M3.52 9.43A6.50 6.50 0 0 1 14.98 5.82" fill="none" stroke="#5a92d8" stroke-width="3.6"/><path d="M18.43 2.93L11.53 8.71L19.32 10.99z" fill="#5a92d8"/><path d="M16.48 10.57A6.50 6.50 0 0 1 5.02 14.18" fill="none" stroke="#7aa8e4" stroke-width="3.6"/><path d="M1.57 17.07L8.47 11.29L0.68 9.01z" fill="#7aa8e4"/></g><g transform="translate(300 68.5)"><path d="M5 4.2v11.6a5.0 2.2 0 0 0 10 0v-11.6" fill="#f4f6fc" stroke="#222" stroke-width="0.9"/><ellipse cx="10.0" cy="4.2" rx="5.0" ry="2.2" fill="#fff" stroke="#222" stroke-width="0.9"/></g><g transform="translate(326 68.5)"><path d="M5 4.2v11.6a5.0 2.2 0 0 0 10 0v-11.6" fill="#f4f6fc" stroke="#222" stroke-width="0.9"/><ellipse cx="10.0" cy="4.2" rx="5.0" ry="2.2" fill="#fff" stroke="#222" stroke-width="0.9"/></g><g transform="translate(352.5 68.5)"><path d="M5 4.2v11.6a5.0 2.2 0 0 0 10 0v-11.6" fill="#f4f6fc" stroke="#222" stroke-width="0.9"/><ellipse cx="10.0" cy="4.2" rx="5.0" ry="2.2" fill="#fff" stroke="#222" stroke-width="0.9"/></g><g transform="translate(378.5 68.5)"><path d="M5 4.2v11.6a5.0 2.2 0 0 0 10 0v-11.6" fill="url(#icb)" stroke="#20e0f0" stroke-width="1.3"/><ellipse cx="10.0" cy="4.2" rx="5.0" ry="2.2" fill="#9cc0f0" stroke="#20e0f0" stroke-width="1.3"/></g><g transform="translate(403 68.5)"><defs></defs><path d="M5 4.2v11.6a5.0 2.2 0 0 0 10 0v-11.6" fill="url(#icb)" stroke="#1c2c5c" stroke-width="0.9"/><ellipse cx="10.0" cy="4.2" rx="5.0" ry="2.2" fill="#9cc0f0" stroke="#1c2c5c" stroke-width="0.9"/></g><g transform="translate(430 68.5)"><path d="M5 4.2v11.6a5.0 2.2 0 0 0 10 0v-11.6" fill="#dde6f6" stroke="#30e4f0" stroke-width="1.3"/><ellipse cx="10.0" cy="4.2" rx="5.0" ry="2.2" fill="#eef2fc" stroke="#30e4f0" stroke-width="1.3"/></g><g transform="translate(456.5 68.5)"><path d="M5 4.2v11.6a5.0 2.2 0 0 0 10 0v-11.6" fill="#cfdcf4" stroke="#5a6888" stroke-width="0.9"/><ellipse cx="10.0" cy="4.2" rx="5.0" ry="2.2" fill="#e8eefc" stroke="#5a6888" stroke-width="0.9"/></g><g transform="translate(482 68.5)"><path d="M5 4.2v11.6a5.0 2.2 0 0 0 10 0v-11.6" fill="#f0f0f0" stroke="#222" stroke-width="0.9"/><ellipse cx="10.0" cy="4.2" rx="5.0" ry="2.2" fill="#fff" stroke="#222" stroke-width="0.9"/><path d="M7 6l2 11M9 6l3 11M12 6l-3 11M13.500 6l-2 11" stroke="#333" stroke-width="0.600" fill="none"/></g><g transform="translate(507 68.5)"><path d="M1 2.98v8.04a4.5 1.98 0 0 0 9 0v-8.04" fill="#f0f2f8" stroke="#444" stroke-width="0.8"/><ellipse cx="5.5" cy="2.98" rx="4.5" ry="1.98" fill="#fff" stroke="#444" stroke-width="0.8"/><path d="M9 8.2v8.6a5.0 2.2 0 0 0 10 0v-8.6" fill="url(#icb)" stroke="#1c2c5c" stroke-width="0.8"/><ellipse cx="14.0" cy="8.2" rx="5.0" ry="2.2" fill="#9cc0f0" stroke="#1c2c5c" stroke-width="0.8"/><path d="M11 1.500l4 1.500-2.500 3z" fill="#30b030"/><path d="M2 15l3.500-1v4z" fill="#30b030"/></g><g transform="translate(533.5 68.5)"><path d="M2 3.2v9.6a5.0 2.2 0 0 0 10 0v-9.6" fill="url(#icb)" stroke="#1c2c5c" stroke-width="0.8"/><ellipse cx="7.0" cy="3.2" rx="5.0" ry="2.2" fill="#9cc0f0" stroke="#1c2c5c" stroke-width="0.8"/><path d="M8.52 12.61A4.50 4.50 0 0 1 16.45 10.11" fill="none" stroke="#5a92d8" stroke-width="2.6"/><path d="M18.94 8.02L13.96 12.20L19.58 13.84z" fill="#5a92d8"/><path d="M17.48 13.39A4.50 4.50 0 0 1 9.55 15.89" fill="none" stroke="#7aa8e4" stroke-width="2.6"/><path d="M7.06 17.98L12.04 13.80L6.42 12.16z" fill="#7aa8e4"/></g><g transform="translate(560 68.5)"><rect x="1" y="2" width="15" height="11" fill="#5a6478" stroke="#2a3040" stroke-width="0.800"/><path d="M4 17l11-13" stroke="#4a84d0" stroke-width="2.600"/><path d="M17 17L7 6" stroke="#d8d8d8" stroke-width="2.200"/><circle cx="6" cy="5" r="2.500" fill="#e0e0e0"/><circle cx="5" cy="4" r="1.200" fill="#5a6478"/></g><g transform="translate(602 68.5)"><path d="M5.5 1l4.5 2.25l-4.5 2.25l-4.5 -2.25z" fill="#d8d8d8" stroke="#222" stroke-width="0.7"/><path d="M1 3.25l4.5 2.25v4.5l-4.5 -2.25z" fill="#8a8a8a" stroke="#222" stroke-width="0.7"/><path d="M10 3.25l-4.5 2.25v4.5l4.5 -2.25z" fill="#6a6a6a" stroke="#222" stroke-width="0.7"/><path d="M13.5 1l4.5 2.25l-4.5 2.25l-4.5 -2.25z" fill="#f4f4f4" stroke="#222" stroke-width="0.7"/><path d="M9 3.25l4.5 2.25v4.5l-4.5 -2.25z" fill="#e8e8e8" stroke="#222" stroke-width="0.7"/><path d="M18 3.25l-4.5 2.25v4.5l4.5 -2.25z" fill="#d0d0d0" stroke="#222" stroke-width="0.7"/><path d="M1.0 14.5h7M4.5 11.0v7" stroke="#35d020" stroke-width="2.2" fill="none"/><path d="M10.5 11l3.500 3.500M13.0 11.5a2.800 2.800 0 1 1 2 4.800" stroke="#3a78d8" stroke-width="1.500" fill="none"/></g><g transform="translate(628 68.5)"><path d="M5.5 0l4.5 2.25l-4.5 2.25l-4.5 -2.25z" fill="#d8d8d8" stroke="#222" stroke-width="0.7"/><path d="M1 2.25l4.5 2.25v4.5l-4.5 -2.25z" fill="#8a8a8a" stroke="#222" stroke-width="0.7"/><path d="M10 2.25l-4.5 2.25v4.5l4.5 -2.25z" fill="#6a6a6a" stroke="#222" stroke-width="0.7"/><path d="M13.5 0l4.5 2.25l-4.5 2.25l-4.5 -2.25z" fill="#f4f4f4" stroke="#222" stroke-width="0.7"/><path d="M9 2.25l4.5 2.25v4.5l-4.5 -2.25z" fill="#e8e8e8" stroke="#222" stroke-width="0.7"/><path d="M18 2.25l-4.5 2.25v4.5l4.5 -2.25z" fill="#d0d0d0" stroke="#222" stroke-width="0.7"/><rect x="2.5" y="6" width="6.500" height="13" rx="2.500" fill="#141414"/><circle cx="5.75" cy="9.6" r="2.200" fill="#e8c000"/><circle cx="5.75" cy="15.2" r="2.200" fill="#10c020"/><rect x="11.5" y="6" width="6.500" height="13" rx="2.500" fill="#141414"/><circle cx="14.75" cy="9.6" r="2.200" fill="#e01010"/><circle cx="14.75" cy="15.2" r="2.200" fill="#e8a000"/></g><g transform="translate(654.5 68.5)"><path d="M5.5 0l4.5 2.25l-4.5 2.25l-4.5 -2.25z" fill="#d8d8d8" stroke="#222" stroke-width="0.7"/><path d="M1 2.25l4.5 2.25v4.5l-4.5 -2.25z" fill="#8a8a8a" stroke="#222" stroke-width="0.7"/><path d="M10 2.25l-4.5 2.25v4.5l4.5 -2.25z" fill="#6a6a6a" stroke="#222" stroke-width="0.7"/><path d="M13.5 0l4.5 2.25l-4.5 2.25l-4.5 -2.25z" fill="#f4f4f4" stroke="#222" stroke-width="0.7"/><path d="M9 2.25l4.5 2.25v4.5l-4.5 -2.25z" fill="#e8e8e8" stroke="#222" stroke-width="0.7"/><path d="M18 2.25l-4.5 2.25v4.5l4.5 -2.25z" fill="#d0d0d0" stroke="#222" stroke-width="0.7"/><path d="M4.52 12.52A5.50 5.50 0 0 1 14.21 9.46" fill="none" stroke="#30a828" stroke-width="2.8"/><path d="M16.89 7.21L11.53 11.71L17.59 13.49z" fill="#30a828"/><path d="M15.48 13.48A5.50 5.50 0 0 1 5.79 16.54" fill="none" stroke="#e0d010" stroke-width="2.8"/><path d="M3.11 18.79L8.47 14.29L2.41 12.51z" fill="#e0d010"/></g><g transform="translate(680.5 68.5)"><path d="M5.5 0l4.5 2.25l-4.5 2.25l-4.5 -2.25z" fill="#d8d8d8" stroke="#222" stroke-width="0.7"/><path d="M1 2.25l4.5 2.25v4.5l-4.5 -2.25z" fill="#8a8a8a" stroke="#222" stroke-width="0.7"/><path d="M10 2.25l-4.5 2.25v4.5l4.5 -2.25z" fill="#6a6a6a" stroke="#222" stroke-width="0.7"/><path d="M13.5 0l4.5 2.25l-4.5 2.25l-4.5 -2.25z" fill="#f4f4f4" stroke="#222" stroke-width="0.7"/><path d="M9 2.25l4.5 2.25v4.5l-4.5 -2.25z" fill="#e8e8e8" stroke="#222" stroke-width="0.7"/><path d="M18 2.25l-4.5 2.25v4.5l4.5 -2.25z" fill="#d0d0d0" stroke="#222" stroke-width="0.7"/><path d="M1.25 12.5h6.5M4.5 9.25v6.5" stroke="#35d020" stroke-width="2.2" fill="none"/><path d="M11 10l-4.500 8" stroke="#222" stroke-width="1.200"/><path d="M10.0 16.5h7" stroke="#e8e000" stroke-width="2.2" fill="none"/></g><g transform="translate(707.5 68.5)"><path d="M5 4.2v11.6a5.0 2.2 0 0 0 10 0v-11.6" fill="url(#icb)" stroke="#1c2c5c" stroke-width="0.9"/><ellipse cx="10.0" cy="4.2" rx="5.0" ry="2.2" fill="#9cc0f0" stroke="#1c2c5c" stroke-width="0.9"/><path d="M10 6v11" stroke="#101830" stroke-width="1.200" stroke-dasharray="2.500 1.500"/></g><g transform="translate(733 68.5)"><path d="M5 4.2v11.6a5.0 2.2 0 0 0 10 0v-11.6" fill="#c8d4f0" stroke="#1c2c5c" stroke-width="0.9"/><ellipse cx="10.0" cy="4.2" rx="5.0" ry="2.2" fill="#a8b8d8" stroke="#1c2c5c" stroke-width="0.9"/><path d="M8.500 6v11.500M11.500 6v11.500" stroke="#e8d830" stroke-width="1.600"/></g><g transform="translate(759.5 68.5)"><path d="M4 4.42v11.16a5.5 2.42 0 0 0 11 0v-11.16" fill="#dcecf8" stroke="#30e0f0" stroke-width="1.2"/><ellipse cx="9.5" cy="4.42" rx="5.5" ry="2.42" fill="#eef6fc" stroke="#30e0f0" stroke-width="1.2"/><path d="M5.500 11l3 4 6-8.500" stroke="#30b020" stroke-width="2.600" fill="none"/></g><g transform="translate(786 68.5)"><ellipse cx="7" cy="17" rx="7" ry="1.600" fill="#555" opacity="0.500"/><path d="M5 5.2v10.6a5.0 2.2 0 0 0 10 0v-10.6" fill="#d4e0f6" stroke="#30e0f0" stroke-width="1.2"/><ellipse cx="10.0" cy="5.2" rx="5.0" ry="2.2" fill="#e8f0fc" stroke="#30e0f0" stroke-width="1.2"/><rect x="13" y="1" width="5" height="5" fill="none" stroke="#e08a18" stroke-width="1.300"/><circle cx="14.500" cy="4.500" r="1.200" fill="#d04010"/></g><g transform="translate(811.5 68.5)"><path d="M5 4.2v11.6a5.0 2.2 0 0 0 10 0v-11.6" fill="#dde8fa" stroke="#5a90d8" stroke-width="1"/><ellipse cx="10.0" cy="4.2" rx="5.0" ry="2.2" fill="#eef4ff" stroke="#5a90d8" stroke-width="1"/><path d="M7 6l2 11M9 6l3 11M12 6l-3 11M13.500 6l-2 11" stroke="#5a90d8" stroke-width="0.600" fill="none"/></g><g transform="translate(837 68.5)"><path d="M1.500 5.500l8.500-3.500 8.500 3.500-2 7-6.500 5.500-6.500-5.500z" fill="#2a4c98" stroke="#0c1838" stroke-width="1"/><path d="M1.500 5.500l8.500 2.500 8.500-2.500-8.500-3.500z" fill="#6a94e0" stroke="#0c1838" stroke-width="0.800"/><path d="M10 8v10" stroke="#0c1838" stroke-width="0.800"/></g><g transform="translate(879 68.5)"><path d="M14.5 9l4.5 2.25l-4.5 2.25l-4.5 -2.25z" fill="#9a9a9a" stroke="#222" stroke-width="0.7"/><path d="M10 11.25l4.5 2.25v4.5l-4.5 -2.25z" fill="#6a6a6a" stroke="#222" stroke-width="0.7"/><path d="M19 11.25l-4.5 2.25v4.5l4.5 -2.25z" fill="#4a4a4a" stroke="#222" stroke-width="0.7"/><path d="M7.0 11.0L0.5 17.5" stroke="#9a9a9a" stroke-width="3" stroke-linecap="round"/><path d="M7.0 11.0L0.5 17.5" stroke="#e4e4e4" stroke-width="1.200" stroke-linecap="round"/><circle cx="10.5" cy="7.5" r="5" fill="#cfe0f4" stroke="#5d83b8" stroke-width="1.400"/><circle cx="11.0" cy="8.0" r="2.75" fill="#a8c4e4"/><path d="M9 5.500l4 2.200-4 2.200z" fill="#8aa4c8" stroke="#5d83b8" stroke-width="0.500"/><path d="M0.500 2.500h4M2.500 0.500v4M0.500 6.500h4" stroke="#000" stroke-width="0.900"/></g><g transform="translate(905 68.5)"><path d="M14.5 9l4.5 2.25l-4.5 2.25l-4.5 -2.25z" fill="#9a9a9a" stroke="#222" stroke-width="0.7"/><path d="M10 11.25l4.5 2.25v4.5l-4.5 -2.25z" fill="#6a6a6a" stroke="#222" stroke-width="0.7"/><path d="M19 11.25l-4.5 2.25v4.5l4.5 -2.25z" fill="#4a4a4a" stroke="#222" stroke-width="0.7"/><path d="M7.0 11.0L0.5 17.5" stroke="#9a9a9a" stroke-width="3" stroke-linecap="round"/><path d="M7.0 11.0L0.5 17.5" stroke="#e4e4e4" stroke-width="1.200" stroke-linecap="round"/><circle cx="10.5" cy="7.5" r="5" fill="#cfe0f4" stroke="#5d83b8" stroke-width="1.400"/><circle cx="11.0" cy="8.0" r="2.75" fill="#a8c4e4"/><path d="M9 5.500l4 2.200-4 2.200z" fill="#8aa4c8" stroke="#5d83b8" stroke-width="0.500"/><path d="M0.5 0.5l3 3M3.5 0.5l-3 3" stroke="#30b828" stroke-width="1.500"/><path d="M16.0 0.5l3 3M19.0 0.5l-3 3" stroke="#30b828" stroke-width="1.500"/><path d="M0.5 15.5l3 3M3.5 15.5l-3 3" stroke="#30b828" stroke-width="1.500"/><path d="M16.0 15.5l3 3M19.0 15.5l-3 3" stroke="#30b828" stroke-width="1.500"/></g><g transform="translate(931 68.5)"><rect x="3.500" y="5" width="13" height="10" fill="#e4ecfc" stroke="#555" stroke-width="1"/><text x="10" y="13.500" font-family="Liberation Sans,sans-serif" font-size="8.500" font-weight="bold" text-anchor="middle" fill="#1a2a80">1:1</text><path d="M1.5 2.0l3 3M4.5 2.0l-3 3" stroke="#30b828" stroke-width="1.500"/><path d="M15.5 2.0l3 3M18.5 2.0l-3 3" stroke="#30b828" stroke-width="1.500"/><path d="M1.5 15.0l3 3M4.5 15.0l-3 3" stroke="#30b828" stroke-width="1.500"/><path d="M15.5 15.0l3 3M18.5 15.0l-3 3" stroke="#30b828" stroke-width="1.500"/></g><g transform="translate(957 68.5)"><path d="M4.500 15.500L15 5" stroke="#38b028" stroke-width="2.200"/><path d="M18 2l-1.500 6.500-5-5z" fill="#38b028"/><circle cx="4.500" cy="15.500" r="2.800" fill="#d8d8d0" stroke="#606060" stroke-width="0.700"/></g><g transform="translate(983 68.5)"><g transform="rotate(-70 10 10)"><path d="M4.02 9.48A6.00 6.00 0 0 1 14.60 6.14" fill="none" stroke="#38a828" stroke-width="3"/><path d="M17.47 3.73L11.72 8.55L18.21 10.45z" fill="#38a828"/><path d="M15.98 10.52A6.00 6.00 0 0 1 5.40 13.86" fill="none" stroke="#38a828" stroke-width="3"/><path d="M2.53 16.27L8.28 11.45L1.79 9.55z" fill="#38a828"/></g></g><g transform="translate(1008.5 68.5)"><g transform="translate(1.5 0) scale(1.0625)"><path d="M0 7.500C3 9.500 12 9.800 16 6" fill="none" stroke="#8088a8" stroke-width="1.400" opacity="0.600"/><path d="M0 7C3 1.500 12 0.500 16 5.500C12 8.500 4 9 0 7z" fill="#d4d8ea" stroke="#4a5070" stroke-width="0.600"/><circle cx="8.300" cy="4.900" r="3.300" fill="#40559a"/><circle cx="8.300" cy="4.900" r="1.500" fill="#141a38"/><circle cx="9.400" cy="3.800" r="0.800" fill="#fff"/><path d="M0 7C3 0.800 12 -0.200 16 5.500" fill="none" stroke="#23253f" stroke-width="1.900"/><path d="M3 2.300l-1.100-1.600M5.500 1.200l-0.600-1.700M8.500 0.700l0-1.600M11.500 1.200l0.800-1.600M13.800 2.800l1.100-1.400" stroke="#23253f" stroke-width="0.700"/></g><circle cx="10" cy="13.500" r="5.800" fill="#f8d030" stroke="#c89010" stroke-width="0.600"/><circle cx="8" cy="12" r="0.800" fill="#403000"/><circle cx="12" cy="12" r="0.800" fill="#403000"/><path d="M7 15c2 2 4 2 6 0" stroke="#403000" stroke-width="0.800" fill="none"/></g><g transform="translate(1051.5 68.5)"><g transform="translate(0 0)"><path d="M1 11l9-6 9 5-9 7z" fill="#dbe6fa" stroke="#9aa8c8" stroke-width="0.500"/><path d="M6.500 12.500V3" stroke="#1a6af0" stroke-width="1.800"/><path d="M6.500 0l2.600 4h-5.200z" fill="#1a6af0"/><path d="M6.500 12.500l7-5" stroke="#28b428" stroke-width="1.800"/><path d="M16 5.500l-4.500 0.800 2.400 3z" fill="#28b428"/><path d="M6.500 12.500l7 4.500" stroke="#e02020" stroke-width="1.800"/><path d="M16 18.500l-4.600-0.600 2.200-3.200z" fill="#e02020"/><circle cx="6.500" cy="12.500" r="2" fill="#e8e8e8" stroke="#707070" stroke-width="0.600"/></g></g><g transform="translate(1078 68.5)"><path d="M8 5l6-3 5 3-6 4z" fill="#dbe6fa" stroke="#9aa8c8" stroke-width="0.500"/><path d="M11 6V1" stroke="#1a6af0" stroke-width="1.200"/><path d="M11 6l4-2" stroke="#28b428" stroke-width="1.200"/><path d="M11 6l4 2.500" stroke="#e02020" stroke-width="1.200"/><path d="M2 17l8-8" stroke="#38a828" stroke-width="3"/><path d="M12.500 6.500l-1 6-5-5z" fill="#38a828"/><rect x="10" y="14" width="8" height="4" fill="#d8dce8" stroke="#707888" stroke-width="0.800"/></g><g transform="translate(1104 68.5)"><path d="M8 6l6-3 5 3-6 4z" fill="#dbe6fa" stroke="#9aa8c8" stroke-width="0.500"/><path d="M11 7V1.500" stroke="#1a6af0" stroke-width="1.200"/><path d="M11 7l4-2" stroke="#28b428" stroke-width="1.200"/><path d="M11 7l4.500 3" stroke="#e02020" stroke-width="1.200"/><path d="M3 10l6 7" stroke="#38a828" stroke-width="3.200"/><path d="M1 7l5.500 0.500-4.500 4z" fill="#38a828"/><path d="M11 19.500l-5.500-0.500 4.500-4z" fill="#38a828"/></g><g transform="translate(1147 68.5)"><rect x="0.5" y="1" width="6.300" height="5.800" fill="#00d8f0"/><rect x="6.9" y="1" width="6.300" height="5.800" fill="#f8d800"/><rect x="13.3" y="1" width="6.300" height="5.800" fill="#00e010"/><rect x="0.5" y="7" width="6.300" height="5.800" fill="#f88000"/><rect x="6.9" y="7" width="6.300" height="5.800" fill="#a86000"/><rect x="13.3" y="7" width="6.300" height="5.800" fill="#f000f0"/><rect x="0.5" y="13" width="6.300" height="5.800" fill="#0000f0"/><rect x="6.9" y="13" width="6.300" height="5.800" fill="#00a030"/><rect x="13.3" y="13" width="6.300" height="5.800" fill="#808080"/></g><g transform="translate(1173 68.5)"><rect x="2.500" y="0.500" width="15" height="18.500" fill="#e8f0fc" stroke="#6878a8" stroke-width="1"/><rect x="4.500" y="2" width="11" height="1.400" fill="#6a9ae8"/><path d="M4.500 5.500h3M12.500 5.500h3" stroke="#f0a020" stroke-width="1.200"/><path d="M4.500 8h11" stroke="#90d860" stroke-width="1.500"/><rect x="5.6" y="10.0" width="2.600" height="2.300" fill="#00d8f0"/><rect x="8.5" y="10.0" width="2.600" height="2.300" fill="#f8d800"/><rect x="11.399999999999999" y="10.0" width="2.600" height="2.300" fill="#00e010"/><rect x="5.6" y="12.7" width="2.600" height="2.300" fill="#f88000"/><rect x="8.5" y="12.7" width="2.600" height="2.300" fill="#a86000"/><rect x="11.399999999999999" y="12.7" width="2.600" height="2.300" fill="#f000f0"/><rect x="5.6" y="15.4" width="2.600" height="2.300" fill="#0000f0"/><rect x="8.5" y="15.4" width="2.600" height="2.300" fill="#00a030"/><rect x="11.399999999999999" y="15.4" width="2.600" height="2.300" fill="#808080"/></g><g transform="translate(1199.5 68.5)"><circle cx="10" cy="10" r="9.300" fill="#72a040" stroke="#4a7020" stroke-width="0.800"/><path d="M5 16L15 4.500" stroke="#4a84d0" stroke-width="2.600"/><path d="M15 16L6 6" stroke="#e8e8e8" stroke-width="2.400"/><circle cx="5.500" cy="5" r="2.600" fill="#e8e8e8"/><circle cx="4.500" cy="3.800" r="1.300" fill="#72a040"/><path d="M8.500 13h3l1 4.500h-5z" fill="#c8c8b8" opacity="0.900"/></g><g transform="translate(1225 68.5)"><rect x="1" y="0.500" width="18.500" height="18.500" fill="#d8e4fa" stroke="#50607c" stroke-width="1"/><rect x="1.500" y="1" width="17.500" height="3.500" fill="#3a78c8"/><path d="M5.500 6.500h2M8.500 6.500h2M11.500 6.500h2M14.500 6.500h2" stroke="#a8b820" stroke-width="2"/><path d="M3.500 6v10" stroke="#b86020" stroke-width="1.600" stroke-dasharray="2 1.200"/><path d="M7 16.500l9-8" stroke="#4a84d0" stroke-width="2"/><path d="M16 16.500l-8-8" stroke="#c8c8c8" stroke-width="1.800"/></g><g transform="translate(1251.5 68.5)"><path d="M2.0 1.0l1.100 1.100-1.100 1.100-1.100-1.100z" fill="#1a3c78"/><path d="M2.0 5.1l1.100 1.100-1.100 1.100-1.100-1.100z" fill="#1a3c78"/><path d="M2.0 9.2l1.100 1.100-1.100 1.100-1.100-1.100z" fill="#1a3c78"/><path d="M2.0 13.299999999999999l1.100 1.100-1.100 1.100-1.100-1.100z" fill="#1a3c78"/><path d="M2.0 17.4l1.100 1.100-1.100 1.100-1.100-1.100z" fill="#1a3c78"/><path d="M6.1 1.0l1.100 1.100-1.100 1.100-1.100-1.100z" fill="#1a3c78"/><path d="M6.1 17.4l1.100 1.100-1.100 1.100-1.100-1.100z" fill="#1a3c78"/><path d="M10.2 1.0l1.100 1.100-1.100 1.100-1.100-1.100z" fill="#1a3c78"/><path d="M10.2 17.4l1.100 1.100-1.100 1.100-1.100-1.100z" fill="#1a3c78"/><path d="M14.299999999999999 1.0l1.100 1.100-1.100 1.100-1.100-1.100z" fill="#1a3c78"/><path d="M14.299999999999999 17.4l1.100 1.100-1.100 1.100-1.100-1.100z" fill="#1a3c78"/><path d="M18.4 1.0l1.100 1.100-1.100 1.100-1.100-1.100z" fill="#1a3c78"/><path d="M18.4 5.1l1.100 1.100-1.100 1.100-1.100-1.100z" fill="#1a3c78"/><path d="M18.4 9.2l1.100 1.100-1.100 1.100-1.100-1.100z" fill="#1a3c78"/><path d="M18.4 13.299999999999999l1.100 1.100-1.100 1.100-1.100-1.100z" fill="#1a3c78"/><path d="M18.4 17.4l1.100 1.100-1.100 1.100-1.100-1.100z" fill="#1a3c78"/><path d="M5 9l6-6 4-1 4 1v5l-3 2-3 1-2-2z" fill="#e0a860" stroke="#8a5820" stroke-width="0.700"/><circle cx="5.500" cy="14" r="2.800" fill="#f0e020"/><path d="M5.500 11.500v5M3 14h5" stroke="#2a70e0" stroke-width="1.300"/></g><g transform="translate(1277.5 68.5)"><path d="M5 2.500l14-1.500-4 14-14 2z" fill="#e86060" stroke="#2a68d8" stroke-width="1.400"/><path d="M8.500 2.200l-4 14.500M12 1.800l-4 14.500M15.500 1.500l-4 14.500M4 6.200l14-1.600M3 10l14-1.800M2 13.500l14-1.800" stroke="#f8d8d8" stroke-width="0.800"/></g></svg>
<svg class="abs" style="left:0;top:125px" width="60" height="245" viewBox="0 125 60 245"><g transform="translate(7 134.5)"><path d="M1 9l5-4M1 12l5-2M2 6l4-3" stroke="#b8c4dc" stroke-width="1.500"/><path d="M7.86 10.64L1.0999999999999996 17.4" stroke="#9a9a9a" stroke-width="3" stroke-linecap="round"/><path d="M7.86 10.64L1.0999999999999996 17.4" stroke="#e4e4e4" stroke-width="1.200" stroke-linecap="round"/><circle cx="11.5" cy="7" r="5.2" fill="#cfe0f4" stroke="#5d83b8" stroke-width="1.400"/><circle cx="12.0" cy="7.5" r="2.8600000000000003" fill="#a8c4e4"/></g><g transform="translate(33.5 134.5)"><path d="M1 3l3 3M5 2.500l10 12M13 13l4 4" stroke="#2a6ad8" stroke-width="1.500"/><path d="M5 13.8L16 1.8" stroke="#c8861c" stroke-width="3.200"/><path d="M5 13.8L16 1.8" stroke="#f0b040" stroke-width="1.200"/><circle cx="16" cy="1.8" r="1.500" fill="#e02020"/><path d="M5.5 13.3l-1.800 3.800 3.800-1.800z" fill="#6a4a20"/></g><path d="M48 132.5h5l-2.500 2.600z" fill="#000"/><g transform="translate(7 160.2)"><rect x="5" y="5.500" width="11" height="9.500" fill="url(#rfg)" stroke="#7a7a80" stroke-width="1.200"/><path d="M1.5 2.0l3 3M4.5 2.0l-3 3" stroke="#30b828" stroke-width="1.500"/><path d="M16.5 2.0l3 3M19.5 2.0l-3 3" stroke="#30b828" stroke-width="1.500"/><path d="M1.5 15.5l3 3M4.5 15.5l-3 3" stroke="#30b828" stroke-width="1.500"/><path d="M16.5 15.5l3 3M19.5 15.5l-3 3" stroke="#30b828" stroke-width="1.500"/></g><g transform="translate(33.5 160.2)"><path d="M7 4c-5-1-7 6-1 7s9 8 12 3-3-7-5-4" stroke="#2a6ad8" stroke-width="1.500" fill="none"/><path d="M5 13.8L16 1.8" stroke="#c8861c" stroke-width="3.200"/><path d="M5 13.8L16 1.8" stroke="#f0b040" stroke-width="1.200"/><circle cx="16" cy="1.8" r="1.500" fill="#e02020"/><path d="M5.5 13.3l-1.800 3.800 3.800-1.800z" fill="#6a4a20"/></g><path d="M48 158.2h5l-2.500 2.600z" fill="#000"/><g transform="translate(7 186.0)"><path d="M14.5 9l4.5 2.25l-4.5 2.25l-4.5 -2.25z" fill="#9a9a9a" stroke="#222" stroke-width="0.7"/><path d="M10 11.25l4.5 2.25v4.5l-4.5 -2.25z" fill="#6a6a6a" stroke="#222" stroke-width="0.7"/><path d="M19 11.25l-4.5 2.25v4.5l4.5 -2.25z" fill="#4a4a4a" stroke="#222" stroke-width="0.7"/><path d="M7.0 11.0L0.5 17.5" stroke="#9a9a9a" stroke-width="3" stroke-linecap="round"/><path d="M7.0 11.0L0.5 17.5" stroke="#e4e4e4" stroke-width="1.200" stroke-linecap="round"/><circle cx="10.5" cy="7.5" r="5" fill="#cfe0f4" stroke="#5d83b8" stroke-width="1.400"/><circle cx="11.0" cy="8.0" r="2.75" fill="#a8c4e4"/><path d="M9 5.500l4 2.200-4 2.200z" fill="#8aa4c8" stroke="#5d83b8" stroke-width="0.500"/><path d="M0.500 2.500h4M2.500 0.500v4M0.500 6.500h4" stroke="#000" stroke-width="0.900"/></g><g transform="translate(33.5 186.0)"><path d="M2.500 3.500h13.500v7.500h-3.500v2.500h3v4h-13z" fill="#fff8c0" stroke="#f0e800" stroke-width="1.600"/><path d="M5 10l3.500 4.500 7-10" stroke="#38b828" stroke-width="2.800" fill="none"/></g><path d="M22 184.0h5l-2.500 2.600z" fill="#000"/><path d="M48 184.0h5l-2.500 2.600z" fill="#000"/><g transform="translate(7 211.7)"><g transform="translate(0 0)"><path d="M1 11l9-6 9 5-9 7z" fill="#dbe6fa" stroke="#9aa8c8" stroke-width="0.500"/><path d="M6.500 12.500V3" stroke="#1a6af0" stroke-width="1.800"/><path d="M6.500 0l2.600 4h-5.200z" fill="#1a6af0"/><path d="M6.500 12.500l7-5" stroke="#28b428" stroke-width="1.800"/><path d="M16 5.500l-4.500 0.800 2.400 3z" fill="#28b428"/><path d="M6.500 12.500l7 4.500" stroke="#e02020" stroke-width="1.800"/><path d="M16 18.500l-4.600-0.600 2.200-3.200z" fill="#e02020"/><circle cx="6.500" cy="12.500" r="2" fill="#e8e8e8" stroke="#707070" stroke-width="0.600"/></g></g><g transform="translate(33.5 211.7)"><path d="M1 14c1-14 6-14 8-3s6 10 8-1" stroke="#2a6ad8" stroke-width="1.500" fill="none"/><path d="M5 13.8L16 1.8" stroke="#c8861c" stroke-width="3.200"/><path d="M5 13.8L16 1.8" stroke="#f0b040" stroke-width="1.200"/><circle cx="16" cy="1.8" r="1.500" fill="#e02020"/><path d="M5.5 13.3l-1.800 3.800 3.800-1.800z" fill="#6a4a20"/></g><path d="M22 209.7h5l-2.500 2.600z" fill="#000"/><path d="M48 209.7h5l-2.500 2.600z" fill="#000"/><g transform="translate(7 238.3)"><path d="M1 2l8-1 3 1.500-8 1z" fill="#8aa0f0" stroke="#4458c0" stroke-width="0.500"/><path d="M1 4.500l8-1 3 1.500-8 1z" fill="#dfe6ff" stroke="#6878c0" stroke-width="0.500"/><path d="M1 7l8-1 3 1.500-8 1z" fill="#f4f4f4" stroke="#8890a8" stroke-width="0.500"/><ellipse cx="10" cy="14" rx="8" ry="4.600" fill="#c89878" stroke="#7a4a30" stroke-width="0.700"/><circle cx="6" cy="14.500" r="1.700" fill="#2040e0"/><circle cx="10.500" cy="15.500" r="1.700" fill="#20b030"/><circle cx="14" cy="12.800" r="1.700" fill="#e02020"/><path d="M18.500 1L11 11.500" stroke="#b06a20" stroke-width="1.800"/><path d="M11.800 10.500l-2 3" stroke="#503010" stroke-width="1.800"/></g><g transform="translate(33.5 238.3)"><path d="M5.500 3l12.500-2-3.500 14-13 3z" fill="#b8d4f8" stroke="#2a68d8" stroke-width="1.400"/><path d="M11.500 2l-3.500 15M4 9.500l12-2" stroke="#2a68d8" stroke-width="1.200"/></g><path d="M22 236.3h5l-2.500 2.600z" fill="#000"/><path d="M48 236.3h5l-2.500 2.600z" fill="#000"/><g transform="translate(7 264.1)"><path d="M3.52 9.43A6.50 6.50 0 0 1 14.98 5.82" fill="none" stroke="#5a92d8" stroke-width="3.6"/><path d="M18.43 2.93L11.53 8.71L19.32 10.99z" fill="#5a92d8"/><path d="M16.48 10.57A6.50 6.50 0 0 1 5.02 14.18" fill="none" stroke="#7aa8e4" stroke-width="3.6"/><path d="M1.57 17.07L8.47 11.29L0.68 9.01z" fill="#7aa8e4"/></g><g transform="translate(33.5 264.1)"><path d="M10.0 2l8.0 4.0l-8.0 4.0l-8.0 -4.0z" fill="#e0e0d8" stroke="#3a3a38" stroke-width="0.8"/><path d="M2 6.0l8.0 4.0v8.0l-8.0 -4.0z" fill="#9a9a90" stroke="#3a3a38" stroke-width="0.8"/><path d="M18 6.0l-8.0 4.0v8.0l8.0 -4.0z" fill="#6a6a64" stroke="#3a3a38" stroke-width="0.8"/></g><path d="M22 262.1h5l-2.500 2.600z" fill="#000"/><path d="M48 262.1h5l-2.500 2.600z" fill="#000"/><g transform="translate(7 289.9)"><ellipse cx="10" cy="18" rx="6" ry="1.500" fill="#707890" opacity="0.500"/><text x="10" y="17.500" font-family="Liberation Sans,sans-serif" font-weight="bold" font-size="20" text-anchor="middle" fill="#4a78c8" stroke="#2c58a8" stroke-width="0.400">?</text></g><g transform="translate(33.5 289.9)"><path d="M3 3v15M17 3v15" stroke="#707070" stroke-width="1.200"/><path d="M4 7h12" stroke="#e8e000" stroke-width="1.600"/><path d="M3.500 7l3-2.200v4.400zM16.500 7l-3-2.200v4.400z" fill="#e8e000"/></g><path d="M22 287.9h5l-2.500 2.600z" fill="#000"/><path d="M48 287.9h5l-2.500 2.600z" fill="#000"/><g transform="translate(7 316.1)"><ellipse cx="10" cy="18" rx="7" ry="1.600" fill="#606880" opacity="0.500"/><path d="M3 5l2 12.500c3 1.500 7 1.500 10 0l2-12.500z" fill="#a8d0f0" stroke="#5a88b8" stroke-width="0.800"/><ellipse cx="10" cy="5" rx="7" ry="1.800" fill="#d0e8fc" stroke="#5a88b8" stroke-width="0.800"/><path d="M8 2h4l1 3h-6z" fill="#e8d820"/><path d="M7 9l5 6M12 8.500l-5 7" stroke="#d8e860" stroke-width="1.500"/></g><g transform="translate(33.5 316.1)"><ellipse cx="10" cy="17.500" rx="6" ry="1.500" fill="#707890" opacity="0.400"/><g transform="translate(2 2) scale(1 1)"><path d="M0.500 6.500L7.500 0.500V4C13 4 15.500 8.500 13 14.500C12.500 10.500 10.500 9 7.500 9V12.500z" fill="#b0b0b0" stroke="#808080" stroke-width="0.700"/></g></g><path d="M22 314.1h5l-2.500 2.600z" fill="#000"/><path d="M48 314.1h5l-2.500 2.600z" fill="#000"/><g transform="translate(7 342.0)"><rect x="1.500" y="1" width="2.800" height="15" fill="#808890" stroke="#404448" stroke-width="0.600"/><path d="M2.900 12l0 5" stroke="#e8a020" stroke-width="2"/><circle cx="11" cy="9" r="5.500" fill="none" stroke="#8a4020" stroke-width="1.200"/><circle cx="11" cy="9" r="1.600" fill="#e8a020"/><path d="M11 9L19.0 9.0" stroke="#8a4020" stroke-width="0.900"/><path d="M11 9L16.7 14.7" stroke="#8a4020" stroke-width="0.900"/><path d="M11 9L11.0 17.0" stroke="#8a4020" stroke-width="0.900"/><path d="M11 9L5.3 14.7" stroke="#8a4020" stroke-width="0.900"/><path d="M11 9L3.0 9.0" stroke="#8a4020" stroke-width="0.900"/><path d="M11 9L5.3 3.3" stroke="#8a4020" stroke-width="0.900"/><path d="M11 9L11.0 1.0" stroke="#8a4020" stroke-width="0.900"/><path d="M11 9L16.7 3.3" stroke="#8a4020" stroke-width="0.900"/><path d="M2 16l8-3 8 2-8 4z" fill="none" stroke="#f08a10" stroke-width="1"/><path d="M4 15.500l8 2M7 14.500l8 2M6 17.500l8-3" stroke="#f08a10" stroke-width="1"/></g><g transform="translate(33.5 342.0)"><path d="M5 9h10l3 3v7.500h-13z" fill="#eef2fa" stroke="#222" stroke-width="1"/><rect x="7.500" y="15" width="7" height="3.500" fill="#fff" stroke="#444" stroke-width="0.600"/><path d="M1.500 3.500l9-2.500 5 1 1 8-11.500 3.500z" fill="#f0c860" stroke="#a88020" stroke-width="0.700"/><path d="M8 4c1.500-2.500 5-2.500 6 0l1.200-0.600-0.500 4-3.500-1.500 1.200-0.700c-0.800-1-2.400-1-3 0.500z" fill="#28a838" stroke="#106018" stroke-width="0.400"/></g><path d="M22 340.0h5l-2.500 2.600z" fill="#000"/></svg>
<div class="vbtn" style="left:64px;top:113px"></div><div class="vbtn" style="left:92px;top:113px"></div><div class="vbtn" style="left:120px;top:113px"></div><div class="vbtn" style="left:148px;top:113px"></div><div class="vbtn" style="left:176px;top:113px"></div><div class="vbtn" style="left:204px;top:113px"></div><div class="vbtn" style="left:232px;top:113px"></div><div class="vbtn" style="left:260px;top:113px"></div><div class="vbtn" style="left:288px;top:113px"></div><div class="vbtn" style="left:316px;top:113px"></div><div class="vbtn" style="left:344px;top:113px"></div><div class="vbtn" style="left:64px;top:141px"></div><div class="vbtn" style="left:64px;top:169px"></div><div class="vbtn sel" style="left:64px;top:197px"></div><div class="vbtn" style="left:64px;top:225px"></div><div class="vbtn" style="left:64px;top:253px"></div>
<svg class="abs" style="left:60px;top:108px" width="320" height="175" viewBox="60 108 320 175"><defs><linearGradient id="rfg" x1="0" x2="1" y1="0" y2="1"><stop offset="0" stop-color="#fffff0"/><stop offset="1" stop-color="#a8c0f0"/></linearGradient><linearGradient id="vgr" x1="0" x2="1" y1="0" y2="1"><stop offset="0" stop-color="#58e048"/><stop offset="1" stop-color="#189818"/></linearGradient><linearGradient id="icb2" x1="0" x2="1" y1="0" y2="0"><stop offset="0" stop-color="#7aa4e8"/><stop offset="0.400" stop-color="#5a84d0"/><stop offset="1" stop-color="#1c3478"/></linearGradient></defs><g transform="translate(66 115)"><rect x="1" y="2" width="17.400" height="3.300" fill="#485c8a" stroke="#6c80b0" stroke-width="0.500"/><rect x="1" y="8.100" width="17.400" height="3.300" fill="#485c8a" stroke="#6c80b0" stroke-width="0.500"/><rect x="1" y="14.400" width="17.400" height="3.300" fill="#485c8a" stroke="#6c80b0" stroke-width="0.500"/></g><g transform="translate(94 115)"><rect x="5" y="5.500" width="11" height="9.500" fill="url(#rfg)" stroke="#7a7a80" stroke-width="1.200"/><path d="M1.5 2.0l3 3M4.5 2.0l-3 3" stroke="#30b828" stroke-width="1.500"/><path d="M16.5 2.0l3 3M19.5 2.0l-3 3" stroke="#30b828" stroke-width="1.500"/><path d="M1.5 15.5l3 3M4.5 15.5l-3 3" stroke="#30b828" stroke-width="1.500"/><path d="M16.5 15.5l3 3M19.5 15.5l-3 3" stroke="#30b828" stroke-width="1.500"/></g><g transform="translate(122 115)"><path d="M1 9l5-4M1 12l5-2M2 6l4-3" stroke="#b8c4dc" stroke-width="1.500"/><path d="M7.86 10.64L1.0999999999999996 17.4" stroke="#9a9a9a" stroke-width="3" stroke-linecap="round"/><path d="M7.86 10.64L1.0999999999999996 17.4" stroke="#e4e4e4" stroke-width="1.200" stroke-linecap="round"/><circle cx="11.5" cy="7" r="5.2" fill="#cfe0f4" stroke="#5d83b8" stroke-width="1.400"/><circle cx="12.0" cy="7.5" r="2.8600000000000003" fill="#a8c4e4"/></g><g transform="translate(150 115)"><path d="M1 12l8-6 9 5-8 7z" fill="none" stroke="#585c70" stroke-width="0.600"/><g transform="translate(2 0)"><path d="M6.500 12.500V3" stroke="#1a6af0" stroke-width="1.800"/><path d="M6.500 0l2.600 4h-5.200z" fill="#1a6af0"/><path d="M6.500 12.500l7-5" stroke="#28b428" stroke-width="1.800"/><path d="M16 5.500l-4.500 0.800 2.400 3z" fill="#28b428"/><path d="M6.500 12.500l7 4.500" stroke="#e02020" stroke-width="1.800"/><path d="M16 18.500l-4.600-0.600 2.200-3.200z" fill="#e02020"/><circle cx="6.500" cy="12.500" r="2" fill="#e8e8e8" stroke="#707070" stroke-width="0.600"/></g></g><g transform="translate(178 115)"><path d="M11.3 1L2.5 3.8M11.3 1L20.2 4.3M2.5 3.8L10.5 8M20.2 4.3L10.5 8M2.5 3.8L2.5 15.5M20.2 4.3L20.2 15.5M10.5 8L10.5 19.7M2.5 15.5L10.5 19.7M20.2 15.5L10.5 19.7M11.3 1L11.3 12.2M2.5 15.5L11.3 12.2M20.2 15.5L11.3 12.2" fill="none" stroke="#050505" stroke-width="1.300" stroke-linejoin="round" stroke-linecap="round"/><polygon points="11.3,1 2.5,3.8 10.5,8 20.2,4.3" fill="url(#vgr)"/><polygon points="11.3,1 2.5,3.8 10.5,8 20.2,4.3" fill="none" stroke="#050505" stroke-width="1.300" stroke-linejoin="round"/></g><g transform="translate(206 115)"><polygon points="11.3,12.2 2.5,15.5 10.5,19.7 20.2,15.5" fill="url(#vgr)"/><path d="M11.3 1L2.5 3.8M11.3 1L20.2 4.3M2.5 3.8L10.5 8M20.2 4.3L10.5 8M2.5 3.8L2.5 15.5M20.2 4.3L20.2 15.5M10.5 8L10.5 19.7M2.5 15.5L10.5 19.7M20.2 15.5L10.5 19.7M11.3 1L11.3 12.2M2.5 15.5L11.3 12.2M20.2 15.5L11.3 12.2" fill="none" stroke="#050505" stroke-width="1.300" stroke-linejoin="round" stroke-linecap="round"/></g><g transform="translate(234 115)"><polygon points="11.3,1 2.5,3.8 2.5,15.5 11.3,12.2" fill="url(#vgr)"/><path d="M11.3 1L2.5 3.8M11.3 1L20.2 4.3M2.5 3.8L10.5 8M20.2 4.3L10.5 8M2.5 3.8L2.5 15.5M20.2 4.3L20.2 15.5M10.5 8L10.5 19.7M2.5 15.5L10.5 19.7M20.2 15.5L10.5 19.7M11.3 1L11.3 12.2M2.5 15.5L11.3 12.2M20.2 15.5L11.3 12.2" fill="none" stroke="#050505" stroke-width="1.300" stroke-linejoin="round" stroke-linecap="round"/></g><g transform="translate(262 115)"><path d="M11.3 1L2.5 3.8M11.3 1L20.2 4.3M2.5 3.8L10.5 8M20.2 4.3L10.5 8M2.5 3.8L2.5 15.5M20.2 4.3L20.2 15.5M10.5 8L10.5 19.7M2.5 15.5L10.5 19.7M20.2 15.5L10.5 19.7M11.3 1L11.3 12.2M2.5 15.5L11.3 12.2M20.2 15.5L11.3 12.2" fill="none" stroke="#050505" stroke-width="1.300" stroke-linejoin="round" stroke-linecap="round"/><polygon points="10.5,8 20.2,4.3 20.2,15.5 10.5,19.7" fill="url(#vgr)"/><polygon points="10.5,8 20.2,4.3 20.2,15.5 10.5,19.7" fill="none" stroke="#050505" stroke-width="1.300" stroke-linejoin="round"/></g><g transform="translate(290 115)"><path d="M11.3 1L2.5 3.8M11.3 1L20.2 4.3M2.5 3.8L10.5 8M20.2 4.3L10.5 8M2.5 3.8L2.5 15.5M20.2 4.3L20.2 15.5M10.5 8L10.5 19.7M2.5 15.5L10.5 19.7M20.2 15.5L10.5 19.7M11.3 1L11.3 12.2M2.5 15.5L11.3 12.2M20.2 15.5L11.3 12.2" fill="none" stroke="#050505" stroke-width="1.300" stroke-linejoin="round" stroke-linecap="round"/><polygon points="2.5,3.8 10.5,8 10.5,19.7 2.5,15.5" fill="url(#vgr)"/><polygon points="2.5,3.8 10.5,8 10.5,19.7 2.5,15.5" fill="none" stroke="#050505" stroke-width="1.300" stroke-linejoin="round"/></g><g transform="translate(318 115)"><polygon points="11.3,1 20.2,4.3 20.2,15.5 11.3,12.2" fill="url(#vgr)"/><path d="M11.3 1L2.5 3.8M11.3 1L20.2 4.3M2.5 3.8L10.5 8M20.2 4.3L10.5 8M2.5 3.8L2.5 15.5M20.2 4.3L20.2 15.5M10.5 8L10.5 19.7M2.5 15.5L10.5 19.7M20.2 15.5L10.5 19.7M11.3 1L11.3 12.2M2.5 15.5L11.3 12.2M20.2 15.5L11.3 12.2" fill="none" stroke="#050505" stroke-width="1.300" stroke-linejoin="round" stroke-linecap="round"/></g><g transform="translate(346 115)"><polygon points="11.3,1 2.5,3.8 10.5,8 20.2,4.3" fill="#58e040"/><polygon points="2.5,3.8 10.5,8 10.5,19.7 2.5,15.5" fill="#38c828"/><polygon points="10.5,8 20.2,4.3 20.2,15.5 10.5,19.7" fill="#209818"/><path d="M2.5 3.8L10.5 8L20.2 4.3M10.5 8L10.5 19.7" fill="none" stroke="#189010" stroke-width="0.800"/></g><g transform="translate(66 143)"><path d="M5 4.42v11.66a5.5 2.42 0 0 0 11 0v-11.66" fill="none" stroke="#1a1a1a" stroke-width="0.9"/><ellipse cx="10.5" cy="4.42" rx="5.5" ry="2.42" fill="none" stroke="#1a1a1a" stroke-width="0.9"/></g><g transform="translate(66 171)"><path d="M5 4.42v11.66a5.5 2.42 0 0 0 11 0v-11.66" fill="none" stroke="#1a1a1a" stroke-width="0.9"/><ellipse cx="10.5" cy="4.42" rx="5.5" ry="2.42" fill="none" stroke="#1a1a1a" stroke-width="0.9"/></g><g transform="translate(66 199)"><path d="M5 4.42v11.66a5.5 2.42 0 0 0 11 0v-11.66" fill="url(#icb2)" stroke="#182858" stroke-width="0.8"/><ellipse cx="10.5" cy="4.42" rx="5.5" ry="2.42" fill="#a8c8f4" stroke="#182858" stroke-width="0.8"/></g><g transform="translate(66 227)"><path d="M5 4.42v11.66a5.5 2.42 0 0 0 11 0v-11.66" fill="#d8e4f8" stroke="#58688c" stroke-width="0.8"/><ellipse cx="10.5" cy="4.42" rx="5.5" ry="2.42" fill="#eef4ff" stroke="#58688c" stroke-width="0.8"/></g><g transform="translate(66 255)"><path d="M5 4.42v11.66a5.5 2.42 0 0 0 11 0v-11.66" fill="none" stroke="#1a1a1a" stroke-width="0.9"/><ellipse cx="10.5" cy="4.42" rx="5.5" ry="2.42" fill="none" stroke="#1a1a1a" stroke-width="0.9"/><path d="M7 6l2 11M9.500 6l3.500 11M13 6l-3.500 11M15 6l-1.500 10" stroke="#1a1a1a" stroke-width="0.600" fill="none"/></g></svg>
<svg class="abs" style="left:0;top:1021px" width="1920" height="20" viewBox="0 1021 1920 20"><g transform="translate(1182 1023) scale(0.8)"><rect x="0.500" y="0.500" width="19" height="19" fill="#e0a8a8" stroke="#a84848" stroke-width="1.200"/><path d="M4.52 9.52A5.50 5.50 0 0 1 14.21 6.46" fill="none" stroke="#d83838" stroke-width="2.6"/><path d="M16.70 4.38L11.72 8.55L17.35 10.20z" fill="#d83838"/><path d="M15.48 10.48A5.50 5.50 0 0 1 5.79 13.54" fill="none" stroke="#e86060" stroke-width="2.6"/><path d="M3.30 15.62L8.28 11.45L2.65 9.80z" fill="#e86060"/></g><rect x="1212.500" y="1022.500" width="17" height="17" fill="#fddf8a" stroke="#e8c666"/><g transform="translate(1213 1023) scale(0.8)"><path d="M3 3l8 2 5-2-2 6 3 5-6-1-4 5-1-6-5-3z" fill="#e8c040" stroke="#a07818" stroke-width="0.600"/><path d="M8 8l9 10" stroke="#8a58c8" stroke-width="2.600"/><path d="M5 5l5 6" stroke="#e04040" stroke-width="1.400"/></g><g transform="translate(1244 1023) scale(0.8)"><path d="M2 8l8-5 8 5v10h-16z" fill="#c8d8f0" stroke="#4a68a8" stroke-width="1"/><path d="M6 2l8 1 4 4-5 3z" fill="#e0a850" stroke="#8a5820" stroke-width="0.600"/><rect x="5" y="11" width="3" height="3" fill="#3a68c8"/><rect x="10" y="11" width="3" height="3" fill="#3a68c8"/><rect x="5" y="15" width="3" height="3" fill="#3a68c8"/></g><g transform="translate(1275 1023) scale(0.8)"><ellipse cx="10" cy="18" rx="6" ry="1.500" fill="#707890" opacity="0.500"/><text x="10" y="17.500" font-family="Liberation Sans,sans-serif" font-weight="bold" font-size="20" text-anchor="middle" fill="#4a78c8" stroke="#2c58a8" stroke-width="0.400">?</text></g><g transform="translate(1306 1023) scale(0.8)"><path d="M13.0 7l6.0 3.0l-6.0 3.0l-6.0 -3.0z" fill="#a8d0f0" stroke="#222" stroke-width="0.7"/><path d="M7 10.0l6.0 3.0v6.0l-6.0 -3.0z" fill="#5a90c8" stroke="#222" stroke-width="0.7"/><path d="M19 10.0l-6.0 3.0v6.0l6.0 -3.0z" fill="#3a68a8" stroke="#222" stroke-width="0.7"/><path d="M7.5 1l4.5 2.25l-4.5 2.25l-4.5 -2.25z" fill="#88b0e8" stroke="#222" stroke-width="0.7"/><path d="M3 3.25l4.5 2.25v4.5l-4.5 -2.25z" fill="#4a78c0" stroke="#222" stroke-width="0.7"/><path d="M12 3.25l-4.5 2.25v4.5l4.5 -2.25z" fill="#2a58a0" stroke="#222" stroke-width="0.7"/><path d="M1 12h9M6 8l4 4-4 4M2 8l4 4-4 4" stroke="#e02020" stroke-width="1.600" fill="none"/></g><rect x="1336.500" y="1022.500" width="17" height="17" fill="#fddf8a" stroke="#e8c666"/><g transform="translate(1337 1023) scale(0.8)"><path d="M10.0 1l8.0 4.0l-8.0 4.0l-8.0 -4.0z" fill="#e040e0" stroke="#1a2848" stroke-width="0.9"/><path d="M2 5.0l8.0 4.0v8.0l-8.0 -4.0z" fill="#60b0f0" stroke="#1a2848" stroke-width="0.9"/><path d="M18 5.0l-8.0 4.0v8.0l8.0 -4.0z" fill="#3a78c8" stroke="#1a2848" stroke-width="0.9"/></g><g transform="translate(1368 1023) scale(0.8)"><rect x="5" y="0.500" width="10" height="19" fill="#f0f0e8" stroke="#605848" stroke-width="1.200"/><path d="M5 5.500h10M5 10h10M5 14.500h10" stroke="#605848" stroke-width="1.200"/><rect x="6" y="10.500" width="8" height="3.500" fill="#e8a030"/></g><g transform="translate(1399 1023) scale(0.8)"><path d="M16.500 10a6.500 6.500 0 1 1-6.500-6.500" fill="none" stroke="#28a028" stroke-width="2.400"/><path d="M10 0l-4.500 3.500 4.500 3.500z" fill="#28a028"/><path d="M10 8v5M7.500 10.500h5" stroke="#2a3ca8" stroke-width="1.600"/></g><g transform="translate(1430 1023) scale(0.8)"><rect x="1" y="1" width="18" height="18" fill="#f0f2f8" stroke="#3a4058" stroke-width="1.600"/><path d="M10 1v18M1 10h18" stroke="#3a4058" stroke-width="1.600"/></g></svg>
</body></html>
